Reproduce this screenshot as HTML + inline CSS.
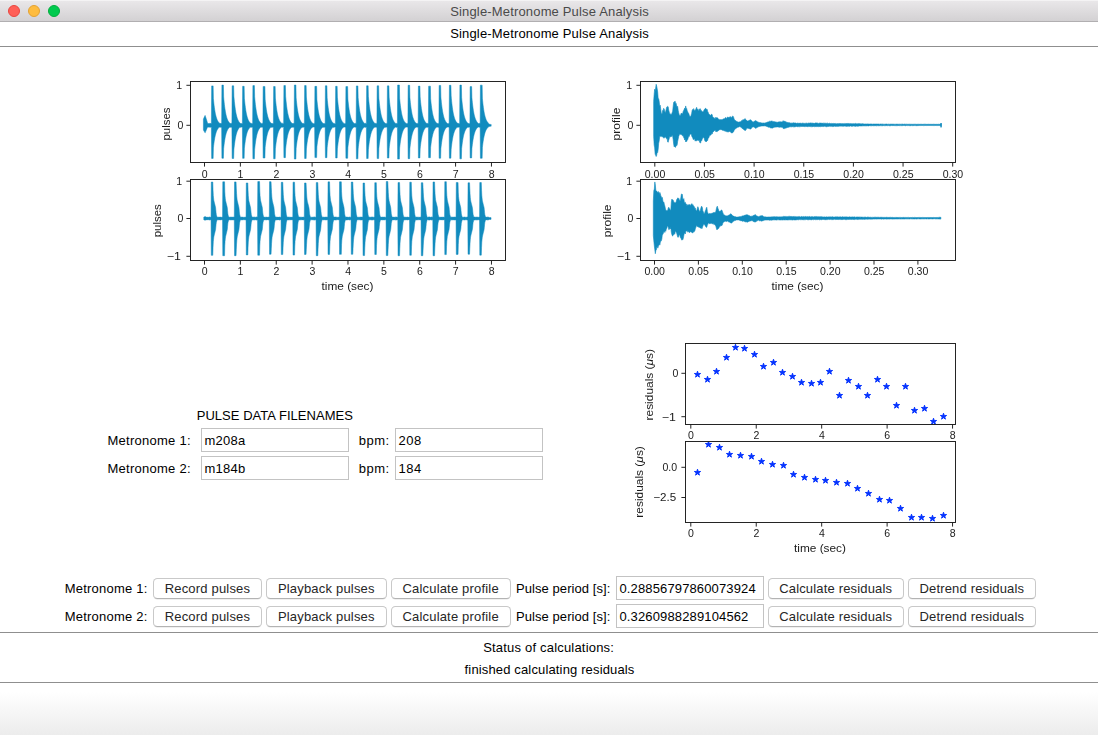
<!DOCTYPE html>
<html><head><meta charset="utf-8"><title>Single-Metronome Pulse Analysis</title>
<style>
html,body{margin:0;padding:0;}
body{width:1098px;height:735px;position:relative;overflow:hidden;background:#fff;font-family:"Liberation Sans", sans-serif;font-size:13px;}
.t{position:absolute;white-space:nowrap;font-size:13px;line-height:16px;height:16px;font-family:"Liberation Sans", sans-serif;}
.titlebar{position:absolute;left:0;top:0;width:1098px;height:22px;box-sizing:border-box;background:linear-gradient(#f4f3f4 0px,#f4f3f4 1px,#e9e7e9 1px,#d3d1d3 21px);border-bottom:1px solid #b1afb1;}
.dot{position:absolute;top:5px;width:12px;height:12px;border-radius:50%;box-sizing:border-box;}
.sep{position:absolute;left:0;width:1098px;height:1px;background:#8f8f8f;}
.entry{position:absolute;box-sizing:border-box;border:1px solid #c3c3c3;background:#fff;}
.btn{position:absolute;box-sizing:border-box;height:21px;border:1px solid #c9c9c9;border-bottom-color:#b3b3b3;border-radius:4.5px;background:#fff;box-shadow:0 0.5px 0.5px rgba(0,0,0,0.12);}
.foot{position:absolute;left:0;top:683px;width:1098px;height:52px;background:linear-gradient(#ffffff,#ffffff 18%,#ececec);}
</style></head><body>
<div class="titlebar"></div>
<div class="dot" style="left:8px;background:#ff5f57;border:1px solid #e9463f;"></div>
<div class="dot" style="left:28px;background:#febc3f;border:1px solid #e3a233;"></div>
<div class="dot" style="left:48px;background:#00ca4e;border:1px solid #02ad3e;"></div>
<div class="sep" style="top:46px"></div>
<div class="sep" style="top:632px"></div>
<div class="sep" style="top:682px"></div>
<div class="foot"></div>

<div class="entry" style="left:201px;top:428px;width:148px;height:24px"></div>
<div class="t" style="left:204.50px;top:433.10px;letter-spacing:0.250px;color:#000;">m208a</div>
<div class="entry" style="left:201px;top:456px;width:148px;height:24px"></div>
<div class="t" style="left:204.50px;top:461.10px;letter-spacing:0.250px;color:#000;">m184b</div>
<div class="entry" style="left:395px;top:428px;width:148px;height:24px"></div>
<div class="t" style="left:398.40px;top:433.10px;letter-spacing:0.533px;color:#000;">208</div>
<div class="entry" style="left:395px;top:456px;width:148px;height:24px"></div>
<div class="t" style="left:398.40px;top:461.10px;letter-spacing:0.533px;color:#000;">184</div>
<div class="entry" style="left:616px;top:576px;width:148px;height:24px"></div>
<div class="t" style="left:619.50px;top:581.10px;letter-spacing:0.133px;color:#000;">0.28856797860073924</div>
<div class="entry" style="left:616px;top:604px;width:148px;height:24px"></div>
<div class="t" style="left:619.50px;top:609.10px;letter-spacing:0.137px;color:#000;">0.3260988289104562</div>
<div class="btn" style="left:153.4px;top:578px;width:108.2px"></div>
<div class="t" style="left:164.70px;top:580.90px;letter-spacing:0.184px;color:#262626;">Record pulses</div>
<div class="btn" style="left:266.0px;top:578px;width:120.6px"></div>
<div class="t" style="left:277.90px;top:580.90px;letter-spacing:0.190px;color:#262626;">Playback pulses</div>
<div class="btn" style="left:391.0px;top:578px;width:119.6px"></div>
<div class="t" style="left:402.50px;top:580.90px;letter-spacing:0.181px;color:#262626;">Calculate profile</div>
<div class="btn" style="left:768.0px;top:578px;width:136.0px"></div>
<div class="t" style="left:779.20px;top:580.90px;letter-spacing:0.166px;color:#262626;">Calculate residuals</div>
<div class="btn" style="left:908.0px;top:578px;width:127.8px"></div>
<div class="t" style="left:919.50px;top:580.90px;letter-spacing:0.165px;color:#262626;">Detrend residuals</div>
<div class="btn" style="left:153.4px;top:606px;width:108.2px"></div>
<div class="t" style="left:164.70px;top:608.90px;letter-spacing:0.184px;color:#262626;">Record pulses</div>
<div class="btn" style="left:266.0px;top:606px;width:120.6px"></div>
<div class="t" style="left:277.90px;top:608.90px;letter-spacing:0.190px;color:#262626;">Playback pulses</div>
<div class="btn" style="left:391.0px;top:606px;width:119.6px"></div>
<div class="t" style="left:402.50px;top:608.90px;letter-spacing:0.181px;color:#262626;">Calculate profile</div>
<div class="btn" style="left:768.0px;top:606px;width:136.0px"></div>
<div class="t" style="left:779.20px;top:608.90px;letter-spacing:0.166px;color:#262626;">Calculate residuals</div>
<div class="btn" style="left:908.0px;top:606px;width:127.8px"></div>
<div class="t" style="left:919.50px;top:608.90px;letter-spacing:0.165px;color:#262626;">Detrend residuals</div>
<div class="t" style="left:450.20px;top:4.00px;letter-spacing:0.163px;color:#4a4a4a;">Single-Metronome Pulse Analysis</div>
<div class="t" style="left:450.20px;top:26.00px;letter-spacing:0.163px;color:#000;">Single-Metronome Pulse Analysis</div>
<div class="t" style="left:196.70px;top:408.10px;letter-spacing:0.037px;color:#000;">PULSE DATA FILENAMES</div>
<div class="t" style="left:107.50px;top:433.10px;letter-spacing:0.258px;color:#000;">Metronome 1:</div>
<div class="t" style="left:107.50px;top:461.10px;letter-spacing:0.258px;color:#000;">Metronome 2:</div>
<div class="t" style="left:358.70px;top:433.10px;letter-spacing:0.525px;color:#000;">bpm:</div>
<div class="t" style="left:358.70px;top:461.10px;letter-spacing:0.525px;color:#000;">bpm:</div>
<div class="t" style="left:64.70px;top:580.90px;letter-spacing:0.217px;color:#000;">Metronome 1:</div>
<div class="t" style="left:64.70px;top:608.90px;letter-spacing:0.217px;color:#000;">Metronome 2:</div>
<div class="t" style="left:515.90px;top:580.90px;letter-spacing:0.081px;color:#000;">Pulse period [s]:</div>
<div class="t" style="left:515.90px;top:608.90px;letter-spacing:0.081px;color:#000;">Pulse period [s]:</div>
<div class="t" style="left:483.20px;top:640.00px;letter-spacing:0.193px;color:#000;">Status of calculations:</div>
<div class="t" style="left:464.60px;top:662.00px;letter-spacing:0.147px;color:#000;">finished calculating residuals</div>
<svg width="860" height="240" viewBox="140 60 860 240" style="position:absolute;left:140px;top:60px;will-change:transform" font-family="Liberation Sans, sans-serif" font-size="10.5" fill="#1a1a1a">
<rect x="190.5" y="81.5" width="315" height="81" fill="#fff" stroke="#1a1a1a" stroke-width="0.95"/>
<clipPath id="c1"><rect x="191" y="82" width="314" height="80"/></clipPath>
<g clip-path="url(#c1)"><polygon points="203.40,119.03 203.65,118.47 203.90,117.91 204.15,117.35 204.40,116.79 204.65,116.23 204.90,115.67 205.15,115.38 205.40,116.17 205.65,116.96 205.90,117.74 206.15,118.53 206.40,119.32 206.65,120.11 206.90,120.89 207.15,121.68 207.40,122.47 207.65,123.25 207.90,123.62 208.15,123.32 208.40,123.65 208.65,123.37 208.90,123.66 209.15,123.49 209.40,123.61 209.65,123.58 209.90,123.19 210.15,123.28 210.40,123.56 210.65,123.24 210.90,123.61 211.15,123.51 211.40,123.25 211.65,85.88 211.90,85.88 212.15,85.88 212.40,85.88 212.65,85.88 212.90,85.88 213.15,85.88 213.40,98.46 213.65,101.12 213.90,103.51 214.15,105.67 214.40,107.61 214.65,109.36 214.90,110.94 215.15,112.36 215.40,113.64 215.65,114.79 215.90,115.83 216.15,116.77 216.40,117.61 216.65,118.37 216.90,119.06 217.15,119.67 217.40,120.23 217.65,120.73 217.90,121.18 218.15,121.59 218.40,121.96 218.65,122.29 218.90,122.59 219.15,122.86 219.40,123.10 219.65,123.32 219.90,123.51 220.15,123.19 220.40,123.60 220.65,123.34 220.90,123.58 221.15,123.27 221.40,123.40 221.65,123.56 221.90,85.12 222.15,85.12 222.40,85.12 222.65,85.12 222.90,85.12 223.15,85.12 223.40,85.12 223.65,96.84 223.90,99.66 224.15,102.19 224.40,104.48 224.65,106.54 224.90,108.39 225.15,110.07 225.40,111.57 225.65,112.93 225.90,114.16 226.15,115.26 226.40,116.25 226.65,117.15 226.90,117.95 227.15,118.68 227.40,119.33 227.65,119.92 227.90,120.46 228.15,120.94 228.40,121.37 228.65,121.76 228.90,122.11 229.15,122.42 229.40,122.71 229.65,122.96 229.90,123.20 230.15,123.32 230.40,123.55 230.65,123.17 230.90,123.69 231.15,123.42 231.40,123.32 231.65,123.23 231.90,123.32 232.15,85.79 232.40,85.79 232.65,85.79 232.90,85.79 233.15,85.79 233.40,85.79 233.65,85.79 233.90,96.19 234.15,99.07 234.40,101.66 234.65,104.00 234.90,106.11 235.15,108.01 235.40,109.72 235.65,111.26 235.90,112.65 236.15,113.90 236.40,115.03 236.65,116.04 236.90,116.96 237.15,117.78 237.40,118.53 237.65,119.20 237.90,119.80 238.15,120.35 238.40,120.84 238.65,121.28 238.90,121.67 239.15,122.03 239.40,122.36 239.65,122.65 239.90,122.91 240.15,123.15 240.40,123.36 240.65,123.22 240.90,123.59 241.15,123.72 241.40,123.56 241.65,123.35 241.90,123.62 242.15,123.63 242.40,123.22 242.65,86.31 242.90,86.31 243.15,86.31 243.40,86.31 243.65,86.31 243.90,86.31 244.15,86.31 244.40,98.37 244.65,101.03 244.90,103.43 245.15,105.60 245.40,107.54 245.65,109.30 245.90,110.88 246.15,112.31 246.40,113.60 246.65,114.75 246.90,115.80 247.15,116.74 247.40,117.58 247.65,118.35 247.90,119.03 248.15,119.65 248.40,120.21 248.65,120.72 248.90,121.17 249.15,121.58 249.40,121.95 249.65,122.28 249.90,122.58 250.15,122.85 250.40,123.09 250.65,123.31 250.90,123.24 251.15,123.68 251.40,123.33 251.65,123.41 251.90,123.56 252.15,123.29 252.40,123.72 252.65,123.65 252.90,85.60 253.15,85.60 253.40,85.60 253.65,85.60 253.90,85.60 254.15,85.60 254.40,85.60 254.65,96.76 254.90,99.59 255.15,102.13 255.40,104.42 255.65,106.49 255.90,108.35 256.15,110.03 256.40,111.54 256.65,112.90 256.90,114.13 257.15,115.23 257.40,116.23 257.65,117.12 257.90,117.93 258.15,118.66 258.40,119.32 258.65,119.91 258.90,120.44 259.15,120.92 259.40,121.36 259.65,121.75 259.90,122.10 260.15,122.42 260.40,122.70 260.65,122.96 260.90,123.19 261.15,123.40 261.40,123.38 261.65,123.22 261.90,123.52 262.15,123.41 262.40,123.24 262.65,123.29 262.90,123.20 263.15,86.46 263.40,86.46 263.65,86.46 263.90,86.46 264.15,86.46 264.40,86.46 264.65,86.46 264.90,86.46 265.15,99.13 265.40,101.72 265.65,104.05 265.90,106.15 266.15,108.05 266.40,109.75 266.65,111.29 266.90,112.68 267.15,113.93 267.40,115.05 267.65,116.07 267.90,116.98 268.15,117.80 268.40,118.54 268.65,119.21 268.90,119.81 269.15,120.36 269.40,120.85 269.65,121.29 269.90,121.68 270.15,122.04 270.40,122.36 270.65,122.65 270.90,122.92 271.15,123.15 271.40,123.26 271.65,123.34 271.90,123.20 272.15,123.45 272.40,123.20 272.65,123.68 272.90,123.60 273.15,123.44 273.40,123.57 273.65,86.47 273.90,86.47 274.15,86.47 274.40,86.47 274.65,86.47 274.90,86.47 275.15,86.47 275.40,98.08 275.65,100.77 275.90,103.20 276.15,105.38 276.40,107.35 276.65,109.13 276.90,110.73 277.15,112.17 277.40,113.47 277.65,114.64 277.90,115.69 278.15,116.64 278.40,117.50 278.65,118.27 278.90,118.97 279.15,119.59 279.40,120.16 279.65,120.67 279.90,121.13 280.15,121.54 280.40,121.91 280.65,122.25 280.90,122.55 281.15,122.82 281.40,123.07 281.65,123.29 281.90,123.49 282.15,123.49 282.40,123.27 282.65,123.23 282.90,123.46 283.15,123.55 283.40,123.62 283.65,123.38 283.90,85.49 284.15,85.49 284.40,85.49 284.65,85.49 284.90,85.49 285.15,85.49 285.40,85.49 285.65,96.27 285.90,99.14 286.15,101.73 286.40,104.06 286.65,106.16 286.90,108.06 287.15,109.76 287.40,111.30 287.65,112.68 287.90,113.93 288.15,115.06 288.40,116.07 288.65,116.98 288.90,117.81 289.15,118.55 289.40,119.22 289.65,119.82 289.90,120.36 290.15,120.85 290.40,121.29 290.65,121.69 290.90,122.04 291.15,122.37 291.40,122.66 291.65,122.92 291.90,123.15 292.15,123.37 292.40,123.55 292.65,123.22 292.90,123.61 293.15,123.17 293.40,123.23 293.65,123.65 293.90,123.59 294.15,123.32 294.40,85.03 294.65,85.03 294.90,85.03 295.15,85.03 295.40,85.03 295.65,85.03 295.90,85.03 296.15,97.77 296.40,100.49 296.65,102.95 296.90,105.16 297.15,107.15 297.40,108.94 297.65,110.56 297.90,112.02 298.15,113.33 298.40,114.52 298.65,115.58 298.90,116.55 299.15,117.41 299.40,118.19 299.65,118.90 299.90,119.53 300.15,120.10 300.40,120.61 300.65,121.08 300.90,121.50 301.15,121.87 301.40,122.21 301.65,122.52 301.90,122.79 302.15,123.04 302.40,123.26 302.65,123.20 302.90,123.47 303.15,123.30 303.40,123.55 303.65,123.47 303.90,123.44 304.15,123.49 304.40,123.39 304.65,85.56 304.90,85.56 305.15,85.56 305.40,85.56 305.65,85.56 305.90,85.56 306.15,85.56 306.40,97.03 306.65,99.83 306.90,102.35 307.15,104.62 307.40,106.66 307.65,108.51 307.90,110.17 308.15,111.67 308.40,113.01 308.65,114.23 308.90,115.33 309.15,116.31 309.40,117.20 309.65,118.00 309.90,118.72 310.15,119.37 310.40,119.96 310.65,120.49 310.90,120.96 311.15,121.39 311.40,121.78 311.65,122.13 311.90,122.44 312.15,122.72 312.40,122.98 312.65,123.21 312.90,123.33 313.15,123.60 313.40,123.54 313.65,123.47 313.90,123.72 314.15,123.53 314.40,123.37 314.65,123.38 314.90,86.36 315.15,86.36 315.40,86.36 315.65,86.36 315.90,86.36 316.15,86.36 316.40,86.36 316.65,86.36 316.90,99.33 317.15,101.90 317.40,104.22 317.65,106.30 317.90,108.18 318.15,109.88 318.40,111.40 318.65,112.78 318.90,114.02 319.15,115.13 319.40,116.14 319.65,117.04 319.90,117.86 320.15,118.60 320.40,119.26 320.65,119.86 320.90,120.40 321.15,120.88 321.40,121.32 321.65,121.71 321.90,122.07 322.15,122.39 322.40,122.67 322.65,122.93 322.90,123.17 323.15,123.31 323.40,123.57 323.65,123.21 323.90,123.64 324.15,123.47 324.40,123.63 324.65,123.45 324.90,123.39 325.15,123.70 325.40,85.76 325.65,85.76 325.90,85.76 326.15,85.76 326.40,85.76 326.65,85.76 326.90,85.76 327.15,97.87 327.40,100.58 327.65,103.03 327.90,105.23 328.15,107.22 328.40,109.01 328.65,110.62 328.90,112.07 329.15,113.38 329.40,114.56 329.65,115.62 329.90,116.58 330.15,117.44 330.40,118.22 330.65,118.92 330.90,119.55 331.15,120.12 331.40,120.63 331.65,121.09 331.90,121.51 332.15,121.88 332.40,122.22 332.65,122.53 332.90,122.80 333.15,123.05 333.40,123.18 333.65,123.27 333.90,123.39 334.15,123.66 334.40,123.38 334.65,123.47 334.90,123.61 335.15,123.70 335.40,123.43 335.65,86.31 335.90,86.31 336.15,86.31 336.40,86.31 336.65,86.31 336.90,86.31 337.15,86.31 337.40,97.16 337.65,99.94 337.90,102.45 338.15,104.71 338.40,106.75 338.65,108.58 338.90,110.24 339.15,111.73 339.40,113.07 339.65,114.28 339.90,115.37 340.15,116.35 340.40,117.24 340.65,118.03 340.90,118.75 341.15,119.40 341.40,119.98 341.65,120.51 341.90,120.98 342.15,121.41 342.40,121.80 342.65,122.14 342.90,122.45 343.15,122.74 343.40,122.99 343.65,123.22 343.90,123.38 344.15,123.61 344.40,123.43 344.65,123.69 344.90,123.68 345.15,123.35 345.40,123.42 345.65,123.38 345.90,86.56 346.15,86.56 346.40,86.56 346.65,86.56 346.90,86.56 347.15,86.56 347.40,86.56 347.65,86.56 347.90,99.09 348.15,101.68 348.40,104.02 348.65,106.13 348.90,108.02 349.15,109.73 349.40,111.27 349.65,112.66 349.90,113.91 350.15,115.04 350.40,116.05 350.65,116.97 350.90,117.79 351.15,118.53 351.40,119.20 351.65,119.81 351.90,120.35 352.15,120.84 352.40,121.28 352.65,121.68 352.90,122.04 353.15,122.36 353.40,122.65 353.65,122.91 353.90,123.15 354.15,123.36 354.40,123.55 354.65,123.36 354.90,123.68 355.15,123.56 355.40,123.33 355.65,123.34 355.90,123.57 356.15,123.65 356.40,85.90 356.65,85.90 356.90,85.90 357.15,85.90 357.40,85.90 357.65,85.90 357.90,85.90 358.15,97.57 358.40,100.31 358.65,102.78 358.90,105.01 359.15,107.02 359.40,108.83 359.65,110.46 359.90,111.92 360.15,113.25 360.40,114.44 360.65,115.51 360.90,116.48 361.15,117.35 361.40,118.14 361.65,118.85 361.90,119.49 362.15,120.06 362.40,120.58 362.65,121.05 362.90,121.47 363.15,121.85 363.40,122.19 363.65,122.50 363.90,122.77 364.15,123.02 364.40,123.25 364.65,123.44 364.90,123.43 365.15,123.41 365.40,123.19 365.65,123.37 365.90,123.28 366.15,123.69 366.40,123.42 366.65,85.78 366.90,85.78 367.15,85.78 367.40,85.78 367.65,85.78 367.90,85.78 368.15,85.78 368.40,96.35 368.65,99.22 368.90,101.80 369.15,104.12 369.40,106.22 369.65,108.11 369.90,109.81 370.15,111.34 370.40,112.72 370.65,113.96 370.90,115.09 371.15,116.10 371.40,117.01 371.65,117.83 371.90,118.57 372.15,119.23 372.40,119.83 372.65,120.37 372.90,120.86 373.15,121.30 373.40,121.70 373.65,122.05 373.90,122.37 374.15,122.66 374.40,122.92 374.65,123.16 374.90,123.37 375.15,123.33 375.40,123.28 375.65,123.49 375.90,123.49 376.15,123.65 376.40,123.32 376.65,123.18 376.90,123.52 377.15,85.81 377.40,85.81 377.65,85.81 377.90,85.81 378.15,85.81 378.40,85.81 378.65,85.81 378.90,98.19 379.15,100.87 379.40,103.29 379.65,105.46 379.90,107.43 380.15,109.19 380.40,110.79 380.65,112.22 380.90,113.52 381.15,114.68 381.40,115.73 381.65,116.68 381.90,117.53 382.15,118.30 382.40,118.99 382.65,119.62 382.90,120.18 383.15,120.69 383.40,121.14 383.65,121.55 383.90,121.92 384.15,122.26 384.40,122.56 384.65,122.83 384.90,123.07 385.15,123.23 385.40,123.22 385.65,123.54 385.90,123.42 386.15,123.20 386.40,123.46 386.65,123.60 386.90,123.70 387.15,123.20 387.40,85.87 387.65,85.87 387.90,85.87 388.15,85.87 388.40,85.87 388.65,85.87 388.90,85.87 389.15,97.14 389.40,99.93 389.65,102.44 389.90,104.70 390.15,106.74 390.40,108.57 390.65,110.23 390.90,111.72 391.15,113.06 391.40,114.27 391.65,115.36 391.90,116.35 392.15,117.23 392.40,118.03 392.65,118.75 392.90,119.40 393.15,119.98 393.40,120.51 393.65,120.98 393.90,121.41 394.15,121.79 394.40,122.14 394.65,122.45 394.90,122.73 395.15,122.99 395.40,123.22 395.65,123.42 395.90,123.46 396.15,123.47 396.40,123.20 396.65,123.40 396.90,123.25 397.15,123.56 397.40,123.29 397.65,85.00 397.90,85.00 398.15,85.00 398.40,85.00 398.65,85.00 398.90,85.00 399.15,85.00 399.40,85.00 399.65,98.32 399.90,100.99 400.15,103.39 400.40,105.56 400.65,107.51 400.90,109.27 401.15,110.86 401.40,112.29 401.65,113.57 401.90,114.73 402.15,115.78 402.40,116.72 402.65,117.57 402.90,118.33 403.15,119.02 403.40,119.64 403.65,120.20 403.90,120.71 404.15,121.16 404.40,121.57 404.65,121.94 404.90,122.27 405.15,122.57 405.40,122.84 405.65,123.09 405.90,123.30 406.15,123.50 406.40,123.52 406.65,123.43 406.90,123.56 407.15,123.54 407.40,123.51 407.65,123.36 407.90,123.59 408.15,85.26 408.40,85.26 408.65,85.26 408.90,85.26 409.15,85.26 409.40,85.26 409.65,85.26 409.90,97.41 410.15,100.17 410.40,102.65 410.65,104.89 410.90,106.91 411.15,108.73 411.40,110.37 411.65,111.85 411.90,113.18 412.15,114.38 412.40,115.46 412.65,116.43 412.90,117.31 413.15,118.10 413.40,118.81 413.65,119.45 413.90,120.03 414.15,120.55 414.40,121.02 414.65,121.45 414.90,121.83 415.15,122.17 415.40,122.48 415.65,122.76 415.90,123.01 416.15,123.24 416.40,123.44 416.65,123.34 416.90,123.18 417.15,123.29 417.40,123.36 417.65,123.39 417.90,123.72 418.15,123.54 418.40,86.10 418.65,86.10 418.90,86.10 419.15,86.10 419.40,86.10 419.65,86.10 419.90,86.10 420.15,96.89 420.40,99.70 420.65,102.24 420.90,104.52 421.15,106.57 421.40,108.43 421.65,110.09 421.90,111.60 422.15,112.95 422.40,114.18 422.65,115.28 422.90,116.27 423.15,117.16 423.40,117.97 423.65,118.69 423.90,119.35 424.15,119.93 424.40,120.47 424.65,120.94 424.90,121.37 425.15,121.76 425.40,122.11 425.65,122.43 425.90,122.71 426.15,122.97 426.40,123.20 426.65,123.19 426.90,123.59 427.15,123.23 427.40,123.43 427.65,123.42 427.90,123.42 428.15,123.58 428.40,123.22 428.65,86.15 428.90,86.15 429.15,86.15 429.40,86.15 429.65,86.15 429.90,86.15 430.15,86.15 430.40,86.15 430.65,98.70 430.90,101.33 431.15,103.70 431.40,105.84 431.65,107.76 431.90,109.50 432.15,111.06 432.40,112.47 432.65,113.74 432.90,114.88 433.15,115.91 433.40,116.84 433.65,117.68 433.90,118.43 434.15,119.11 434.40,119.72 434.65,120.28 434.90,120.77 435.15,121.22 435.40,121.62 435.65,121.99 435.90,122.32 436.15,122.61 436.40,122.88 436.65,123.12 436.90,123.33 437.15,123.53 437.40,123.37 437.65,123.71 437.90,123.36 438.15,123.65 438.40,123.20 438.65,123.39 438.90,123.47 439.15,85.38 439.40,85.38 439.65,85.38 439.90,85.38 440.15,85.38 440.40,85.38 440.65,85.38 440.90,97.08 441.15,99.87 441.40,102.39 441.65,104.65 441.90,106.70 442.15,108.54 442.40,110.20 442.65,111.69 442.90,113.04 443.15,114.25 443.40,115.34 443.65,116.33 443.90,117.21 444.15,118.01 444.40,118.74 444.65,119.38 444.90,119.97 445.15,120.50 445.40,120.97 445.65,121.40 445.90,121.79 446.15,122.13 446.40,122.45 446.65,122.73 446.90,122.98 447.15,123.21 447.40,123.42 447.65,123.59 447.90,123.56 448.15,123.51 448.40,123.60 448.65,123.69 448.90,123.22 449.15,123.19 449.40,85.25 449.65,85.25 449.90,85.25 450.15,85.25 450.40,85.25 450.65,85.25 450.90,85.25 451.15,95.85 451.40,98.76 451.65,101.38 451.90,103.75 452.15,105.88 452.40,107.80 452.65,109.53 452.90,111.09 453.15,112.50 453.40,113.77 453.65,114.91 453.90,115.93 454.15,116.86 454.40,117.70 454.65,118.45 454.90,119.13 455.15,119.74 455.40,120.29 455.65,120.78 455.90,121.23 456.15,121.63 456.40,122.00 456.65,122.32 456.90,122.62 457.15,122.88 457.40,123.12 457.65,123.22 457.90,123.23 458.15,123.62 458.40,123.26 458.65,123.53 458.90,123.47 459.15,123.63 459.40,123.24 459.65,123.18 459.90,85.07 460.15,85.07 460.40,85.07 460.65,85.07 460.90,85.07 461.15,85.07 461.40,85.07 461.65,97.56 461.90,100.31 462.15,102.78 462.40,105.01 462.65,107.02 462.90,108.82 463.15,110.45 463.40,111.92 463.65,113.25 463.90,114.44 464.15,115.51 464.40,116.48 464.65,117.35 464.90,118.14 465.15,118.85 465.40,119.49 465.65,120.06 465.90,120.58 466.15,121.05 466.40,121.47 466.65,121.85 466.90,122.19 467.15,122.50 467.40,122.77 467.65,123.02 467.90,123.25 468.15,123.37 468.40,123.63 468.65,123.18 468.90,123.48 469.15,123.43 469.40,123.43 469.65,123.70 469.90,123.39 470.15,86.61 470.40,86.61 470.65,86.61 470.90,86.61 471.15,86.61 471.40,86.61 471.65,86.61 471.90,97.55 472.15,100.30 472.40,102.77 472.65,105.00 472.90,107.01 473.15,108.82 473.40,110.45 473.65,111.92 473.90,113.24 474.15,114.43 474.40,115.51 474.65,116.48 474.90,117.35 475.15,118.14 475.40,118.84 475.65,119.48 475.90,120.06 476.15,120.58 476.40,121.04 476.65,121.47 476.90,121.84 477.15,122.19 477.40,122.49 477.65,122.77 477.90,123.02 478.15,123.25 478.40,123.39 478.65,123.60 478.90,123.48 479.15,123.30 479.40,123.29 479.65,123.29 479.90,123.60 480.15,123.46 480.40,85.14 480.65,85.14 480.90,85.14 481.15,85.14 481.40,85.14 481.65,85.14 481.90,85.14 482.15,85.14 482.40,98.30 482.65,100.97 482.90,103.38 483.15,105.55 483.40,107.50 483.65,109.26 483.90,110.85 484.15,112.28 484.40,113.57 484.65,114.73 484.90,115.77 485.15,116.72 485.40,117.56 485.65,118.33 485.90,119.02 486.15,119.64 486.40,120.20 486.65,120.70 486.90,121.16 487.15,121.57 487.40,121.94 487.65,122.27 487.90,122.57 488.15,122.84 488.40,123.23 488.65,123.60 488.90,123.92 489.15,123.96 489.40,124.08 489.65,124.26 489.90,124.40 490.15,124.40 490.40,124.40 490.65,124.40 490.90,124.40 491.15,124.40 491.15,126.20 490.90,126.20 490.65,126.20 490.40,126.20 490.15,126.20 489.90,126.20 489.65,126.34 489.40,126.52 489.15,126.64 488.90,126.57 488.65,126.76 488.40,127.00 488.15,127.33 487.90,127.54 487.65,127.79 487.40,128.06 487.15,128.37 486.90,128.70 486.65,129.08 486.40,129.49 486.15,129.95 485.90,130.46 485.65,131.03 485.40,131.66 485.15,132.35 484.90,133.13 484.65,133.99 484.40,134.94 484.15,136.00 483.90,137.17 483.65,138.48 483.40,139.92 483.15,141.53 482.90,143.31 482.65,145.29 482.40,147.48 482.15,158.29 481.90,158.29 481.65,158.29 481.40,158.29 481.15,158.29 480.90,158.29 480.65,158.29 480.40,158.29 480.15,127.14 479.90,127.00 479.65,127.31 479.40,127.31 479.15,127.30 478.90,127.12 478.65,127.00 478.40,127.21 478.15,127.03 477.90,127.31 477.65,127.43 477.40,127.66 477.15,127.92 476.90,128.21 476.65,128.53 476.40,128.89 476.15,129.28 475.90,129.72 475.65,130.20 475.40,130.74 475.15,131.34 474.90,132.00 474.65,132.73 474.40,133.55 474.15,134.46 473.90,135.46 473.65,136.58 473.40,137.81 473.15,139.19 472.90,140.71 472.65,142.41 472.40,144.28 472.15,146.37 471.90,148.68 471.65,157.90 471.40,157.90 471.15,157.90 470.90,157.90 470.65,157.90 470.40,157.90 470.15,157.90 469.90,127.21 469.65,126.90 469.40,127.17 469.15,127.17 468.90,127.12 468.65,127.42 468.40,126.92 468.15,127.23 467.90,127.03 467.65,127.24 467.40,127.41 467.15,127.64 466.90,127.90 466.65,128.18 466.40,128.50 466.15,128.85 465.90,129.24 465.65,129.67 465.40,130.15 465.15,130.68 464.90,131.27 464.65,131.93 464.40,132.66 464.15,133.47 463.90,134.36 463.65,135.36 463.40,136.46 463.15,137.69 462.90,139.05 462.65,140.56 462.40,142.23 462.15,144.09 461.90,146.15 461.65,148.44 461.40,158.87 461.15,158.87 460.90,158.87 460.65,158.87 460.40,158.87 460.15,158.87 459.90,158.87 459.65,127.42 459.40,127.36 459.15,126.97 458.90,127.13 458.65,127.07 458.40,127.34 458.15,126.98 457.90,127.37 457.65,127.38 457.40,127.09 457.15,127.28 456.90,127.50 456.65,127.74 456.40,128.01 456.15,128.31 455.90,128.64 455.65,129.01 455.40,129.41 455.15,129.87 454.90,130.37 454.65,130.92 454.40,131.54 454.15,132.22 453.90,132.99 453.65,133.83 453.40,134.77 453.15,135.80 452.90,136.96 452.65,138.24 452.40,139.66 452.15,141.23 451.90,142.98 451.65,144.92 451.40,147.08 451.15,149.47 450.90,158.17 450.65,158.17 450.40,158.17 450.15,158.17 449.90,158.17 449.65,158.17 449.40,158.17 449.15,127.41 448.90,127.38 448.65,126.91 448.40,127.00 448.15,127.09 447.90,127.04 447.65,127.01 447.40,127.16 447.15,127.26 446.90,127.21 446.65,127.42 446.40,127.65 446.15,127.91 445.90,128.19 445.65,128.51 445.40,128.87 445.15,129.26 444.90,129.69 444.65,130.17 444.40,130.71 444.15,131.30 443.90,131.96 443.65,132.69 443.40,133.50 443.15,134.40 442.90,135.40 442.65,136.51 442.40,137.74 442.15,139.11 441.90,140.63 441.65,142.31 441.40,144.17 441.15,146.25 440.90,148.55 440.65,158.19 440.40,158.19 440.15,158.19 439.90,158.19 439.65,158.19 439.40,158.19 439.15,158.19 438.90,127.13 438.65,127.21 438.40,127.40 438.15,126.95 437.90,127.24 437.65,126.89 437.40,127.23 437.15,127.06 436.90,127.19 436.65,127.11 436.40,127.30 436.15,127.52 435.90,127.77 435.65,128.04 435.40,128.34 435.15,128.67 434.90,129.04 434.65,129.46 434.40,129.91 434.15,130.42 433.90,130.98 433.65,131.60 433.40,132.30 433.15,133.06 432.90,133.92 432.65,134.86 432.40,135.91 432.15,137.08 431.90,138.37 431.65,139.81 431.40,141.40 431.15,143.17 430.90,145.13 430.65,147.30 430.40,157.69 430.15,157.69 429.90,157.69 429.65,157.69 429.40,157.69 429.15,157.69 428.90,157.69 428.65,157.69 428.40,127.38 428.15,127.02 427.90,127.18 427.65,127.18 427.40,127.17 427.15,127.37 426.90,126.95 426.65,127.41 426.40,127.05 426.15,127.24 425.90,127.45 425.65,127.69 425.40,127.95 425.15,128.24 424.90,128.57 424.65,128.93 424.40,129.32 424.15,129.77 423.90,130.26 423.65,130.80 423.40,131.40 423.15,132.08 422.90,132.82 422.65,133.64 422.40,134.56 422.15,135.58 421.90,136.71 421.65,137.96 421.40,139.35 421.15,140.89 420.90,142.60 420.65,144.50 420.40,146.61 420.15,148.95 419.90,157.93 419.65,157.93 419.40,157.93 419.15,157.93 418.90,157.93 418.65,157.93 418.40,157.93 418.15,127.06 417.90,126.88 417.65,127.21 417.40,127.24 417.15,127.31 416.90,127.42 416.65,127.26 416.40,127.09 416.15,127.02 415.90,127.21 415.65,127.42 415.40,127.65 415.15,127.91 414.90,128.19 414.65,128.51 414.40,128.86 414.15,129.25 413.90,129.69 413.65,130.17 413.40,130.71 413.15,131.30 412.90,131.96 412.65,132.69 412.40,133.50 412.15,134.40 411.90,135.40 411.65,136.51 411.40,137.74 411.15,139.10 410.90,140.62 410.65,142.30 410.40,144.17 410.15,146.24 409.90,148.54 409.65,158.66 409.40,158.66 409.15,158.66 408.90,158.66 408.65,158.66 408.40,158.66 408.15,158.66 407.90,127.01 407.65,127.24 407.40,127.09 407.15,127.06 406.90,127.04 406.65,127.17 406.40,127.08 406.15,127.03 405.90,127.21 405.65,127.16 405.40,127.36 405.15,127.59 404.90,127.84 404.65,128.12 404.40,128.43 404.15,128.77 403.90,129.15 403.65,129.57 403.40,130.04 403.15,130.56 402.90,131.14 402.65,131.78 402.40,132.49 402.15,133.28 401.90,134.16 401.65,135.13 401.40,136.21 401.15,137.41 400.90,138.74 400.65,140.22 400.40,141.85 400.15,143.67 399.90,145.69 399.65,147.93 399.40,159.09 399.15,159.09 398.90,159.09 398.65,159.09 398.40,159.09 398.15,159.09 397.90,159.09 397.65,159.09 397.40,127.31 397.15,127.04 396.90,127.35 396.65,127.20 396.40,127.40 396.15,127.13 395.90,127.14 395.65,126.93 395.40,127.27 395.15,127.22 394.90,127.43 394.65,127.66 394.40,127.92 394.15,128.21 393.90,128.53 393.65,128.88 393.40,129.28 393.15,129.71 392.90,130.20 392.65,130.73 392.40,131.33 392.15,131.99 391.90,132.73 391.65,133.54 391.40,134.45 391.15,135.45 390.90,136.57 390.65,137.80 390.40,139.17 390.15,140.70 389.90,142.39 389.65,144.26 389.40,146.35 389.15,148.66 388.90,158.00 388.65,158.00 388.40,158.00 388.15,158.00 387.90,158.00 387.65,158.00 387.40,158.00 387.15,127.40 386.90,126.90 386.65,127.00 386.40,127.14 386.15,127.40 385.90,127.18 385.65,127.06 385.40,127.38 385.15,127.37 384.90,127.18 384.65,127.38 384.40,127.61 384.15,127.86 383.90,128.15 383.65,128.46 383.40,128.80 383.15,129.19 382.90,129.62 382.65,130.09 382.40,130.62 382.15,131.20 381.90,131.85 381.65,132.57 381.40,133.36 381.15,134.25 380.90,135.23 380.65,136.32 380.40,137.53 380.15,138.87 379.90,140.37 379.65,142.02 379.40,143.85 379.15,145.89 378.90,148.15 378.65,158.59 378.40,158.59 378.15,158.59 377.90,158.59 377.65,158.59 377.40,158.59 377.15,158.59 376.90,127.08 376.65,127.42 376.40,127.28 376.15,126.95 375.90,127.11 375.65,127.11 375.40,127.32 375.15,127.27 374.90,127.16 374.65,127.23 374.40,127.40 374.15,127.52 373.90,127.76 373.65,128.03 373.40,128.33 373.15,128.67 372.90,129.03 372.65,129.44 372.40,129.90 372.15,130.40 371.90,130.96 371.65,131.59 371.40,132.28 371.15,133.04 370.90,133.89 370.65,134.84 370.40,135.88 370.15,137.05 369.90,138.33 369.65,139.77 369.40,141.35 369.15,143.12 368.90,145.07 368.65,147.24 368.40,149.65 368.15,158.55 367.90,158.55 367.65,158.55 367.40,158.55 367.15,158.55 366.90,158.55 366.65,158.55 366.40,127.18 366.15,126.91 365.90,127.32 365.65,127.23 365.40,127.41 365.15,127.19 364.90,127.17 364.65,127.16 364.40,127.05 364.15,127.24 363.90,127.45 363.65,127.69 363.40,127.95 363.15,128.24 362.90,128.56 362.65,128.92 362.40,129.32 362.15,129.76 361.90,130.25 361.65,130.80 361.40,131.40 361.15,132.07 360.90,132.81 360.65,133.64 360.40,134.55 360.15,135.57 359.90,136.69 359.65,137.94 359.40,139.33 359.15,140.87 358.90,142.58 358.65,144.48 358.40,146.59 358.15,148.92 357.90,158.86 357.65,158.86 357.40,158.86 357.15,158.86 356.90,158.86 356.65,158.86 356.40,158.86 356.15,126.95 355.90,127.03 355.65,127.26 355.40,127.27 355.15,127.04 354.90,126.92 354.65,127.24 354.40,126.99 354.15,126.95 353.90,127.30 353.65,127.33 353.40,127.56 353.15,127.80 352.90,128.08 352.65,128.38 352.40,128.72 352.15,129.10 351.90,129.52 351.65,129.98 351.40,130.49 351.15,131.06 350.90,131.69 350.65,132.40 350.40,133.17 350.15,134.04 349.90,135.00 349.65,136.06 349.40,137.25 349.15,138.56 348.90,140.01 348.65,141.63 348.40,143.42 348.15,145.41 347.90,147.62 347.65,158.28 347.40,158.28 347.15,158.28 346.90,158.28 346.65,158.28 346.40,158.28 346.15,158.28 345.90,158.28 345.65,127.22 345.40,127.18 345.15,127.25 344.90,126.92 344.65,126.91 344.40,127.17 344.15,126.93 343.90,127.22 343.65,127.11 343.40,127.23 343.15,127.45 342.90,127.68 342.65,127.94 342.40,128.23 342.15,128.56 341.90,128.91 341.65,129.31 341.40,129.75 341.15,130.24 340.90,130.78 340.65,131.38 340.40,132.05 340.15,132.79 339.90,133.61 339.65,134.53 339.40,135.54 339.15,136.66 338.90,137.91 338.65,139.30 338.40,140.83 338.15,142.54 337.90,144.43 337.65,146.53 337.40,148.86 337.15,157.95 336.90,157.95 336.65,157.95 336.40,157.95 336.15,157.95 335.90,157.95 335.65,157.95 335.40,127.17 335.15,126.90 334.90,126.99 334.65,127.13 334.40,127.22 334.15,126.94 333.90,127.21 333.65,127.33 333.40,127.42 333.15,127.14 332.90,127.35 332.65,127.57 332.40,127.82 332.15,128.10 331.90,128.40 331.65,128.74 331.40,129.12 331.15,129.54 330.90,130.01 330.65,130.52 330.40,131.10 330.15,131.73 329.90,132.44 329.65,133.22 329.40,134.09 329.15,135.06 328.90,136.13 328.65,137.32 328.40,138.64 328.15,140.10 327.90,141.73 327.65,143.53 327.40,145.53 327.15,147.76 326.90,157.67 326.65,157.67 326.40,157.67 326.15,157.67 325.90,157.67 325.65,157.67 325.40,157.67 325.15,126.90 324.90,127.21 324.65,127.15 324.40,126.97 324.15,127.13 323.90,126.96 323.65,127.39 323.40,126.90 323.15,127.29 322.90,127.20 322.65,127.26 322.40,127.48 322.15,127.72 321.90,127.98 321.65,128.28 321.40,128.60 321.15,128.97 320.90,129.37 320.65,129.81 320.40,130.31 320.15,130.86 319.90,131.47 319.65,132.15 319.40,132.90 319.15,133.73 318.90,134.66 318.65,135.69 318.40,136.83 318.15,138.09 317.90,139.50 317.65,141.06 317.40,142.79 317.15,144.71 316.90,146.84 316.65,157.60 316.40,157.60 316.15,157.60 315.90,157.60 315.65,157.60 315.40,157.60 315.15,157.60 314.90,157.60 314.65,127.22 314.40,127.23 314.15,127.07 313.90,126.88 313.65,127.13 313.40,127.06 313.15,126.91 312.90,127.27 312.65,127.10 312.40,127.30 312.15,127.45 311.90,127.69 311.65,127.95 311.40,128.24 311.15,128.56 310.90,128.92 310.65,129.32 310.40,129.76 310.15,130.25 309.90,130.80 309.65,131.40 309.40,132.07 309.15,132.81 308.90,133.64 308.65,134.55 308.40,135.57 308.15,136.69 307.90,137.95 307.65,139.33 307.40,140.87 307.15,142.58 306.90,144.48 306.65,146.59 306.40,148.93 306.15,158.52 305.90,158.52 305.65,158.52 305.40,158.52 305.15,158.52 304.90,158.52 304.65,158.52 304.40,127.21 304.15,127.11 303.90,127.16 303.65,127.13 303.40,127.05 303.15,127.30 302.90,127.13 302.65,127.40 302.40,127.01 302.15,127.19 301.90,127.40 301.65,127.63 301.40,127.89 301.15,128.17 300.90,128.49 300.65,128.84 300.40,129.23 300.15,129.66 299.90,130.14 299.65,130.67 299.40,131.26 299.15,131.91 298.90,132.64 298.65,133.44 298.40,134.33 298.15,135.33 297.90,136.43 297.65,137.65 297.40,139.01 297.15,140.51 296.90,142.18 296.65,144.03 296.40,146.09 296.15,148.37 295.90,159.05 295.65,159.05 295.40,159.05 295.15,159.05 294.90,159.05 294.65,159.05 294.40,159.05 294.15,127.28 293.90,127.01 293.65,126.95 293.40,127.37 293.15,127.43 292.90,126.99 292.65,127.38 292.40,127.05 292.15,127.05 291.90,127.37 291.65,127.32 291.40,127.45 291.15,127.68 290.90,127.95 290.65,128.24 290.40,128.56 290.15,128.92 289.90,129.31 289.65,129.76 289.40,130.24 289.15,130.79 288.90,131.39 288.65,132.06 288.40,132.80 288.15,133.62 287.90,134.54 287.65,135.55 287.40,136.68 287.15,137.93 286.90,139.31 286.65,140.85 286.40,142.56 286.15,144.45 285.90,146.55 285.65,148.89 285.40,157.64 285.15,157.64 284.90,157.64 284.65,157.64 284.40,157.64 284.15,157.64 283.90,157.64 283.65,127.22 283.40,126.98 283.15,127.05 282.90,127.14 282.65,127.37 282.40,127.33 282.15,127.11 281.90,126.94 281.65,127.14 281.40,127.23 281.15,127.44 280.90,127.67 280.65,127.94 280.40,128.22 280.15,128.55 279.90,128.90 279.65,129.30 279.40,129.74 279.15,130.22 278.90,130.76 278.65,131.36 278.40,132.03 278.15,132.77 277.90,133.59 277.65,134.50 277.40,135.51 277.15,136.63 276.90,137.87 276.65,139.25 276.40,140.79 276.15,142.49 275.90,144.37 275.65,146.47 275.40,148.79 275.15,158.81 274.90,158.81 274.65,158.81 274.40,158.81 274.15,158.81 273.90,158.81 273.65,158.81 273.40,127.03 273.15,127.16 272.90,127.00 272.65,126.92 272.40,127.40 272.15,127.15 271.90,127.40 271.65,127.26 271.40,127.34 271.15,127.27 270.90,127.31 270.65,127.53 270.40,127.78 270.15,128.05 269.90,128.35 269.65,128.68 269.40,129.05 269.15,129.47 268.90,129.92 268.65,130.43 268.40,131.00 268.15,131.62 267.90,132.31 267.65,133.08 267.40,133.94 267.15,134.89 266.90,135.94 266.65,137.11 266.40,138.40 266.15,139.84 265.90,141.44 265.65,143.21 265.40,145.18 265.15,147.36 264.90,158.04 264.65,158.04 264.40,158.04 264.15,158.04 263.90,158.04 263.65,158.04 263.40,158.04 263.15,158.04 262.90,127.40 262.65,127.31 262.40,127.36 262.15,127.19 261.90,127.08 261.65,127.38 261.40,127.22 261.15,127.12 260.90,127.08 260.65,127.28 260.40,127.49 260.15,127.73 259.90,128.00 259.65,128.30 259.40,128.63 259.15,128.99 258.90,129.40 258.65,129.85 258.40,130.34 258.15,130.90 257.90,131.51 257.65,132.20 257.40,132.95 257.15,133.79 256.90,134.72 256.65,135.76 256.40,136.91 256.15,138.18 255.90,139.60 255.65,141.17 255.40,142.91 255.15,144.84 254.90,146.99 254.65,149.37 254.40,158.79 254.15,158.79 253.90,158.79 253.65,158.79 253.40,158.79 253.15,158.79 252.90,158.79 252.65,126.95 252.40,126.88 252.15,127.31 251.90,127.04 251.65,127.19 251.40,127.27 251.15,126.90 250.90,127.36 250.65,126.99 250.40,127.17 250.15,127.38 249.90,127.61 249.65,127.86 249.40,128.14 249.15,128.46 248.90,128.80 248.65,129.19 248.40,129.61 248.15,130.09 247.90,130.61 247.65,131.20 247.40,131.84 247.15,132.56 246.90,133.36 246.65,134.24 246.40,135.23 246.15,136.31 245.90,137.52 245.65,138.87 245.40,140.36 245.15,142.01 244.90,143.84 244.65,145.88 244.40,148.14 244.15,158.36 243.90,158.36 243.65,158.36 243.40,158.36 243.15,158.36 242.90,158.36 242.65,158.36 242.40,127.38 242.15,126.97 241.90,126.98 241.65,127.25 241.40,127.04 241.15,126.88 240.90,127.01 240.65,127.38 240.40,127.21 240.15,127.15 239.90,127.31 239.65,127.53 239.40,127.77 239.15,128.04 238.90,128.34 238.65,128.68 238.40,129.05 238.15,129.46 237.90,129.92 237.65,130.42 237.40,130.99 237.15,131.61 236.90,132.30 236.65,133.07 236.40,133.93 236.15,134.87 235.90,135.92 235.65,137.09 235.40,138.38 235.15,139.82 234.90,141.42 234.65,143.18 234.40,145.15 234.15,147.33 233.90,149.75 233.65,158.47 233.40,158.47 233.15,158.47 232.90,158.47 232.65,158.47 232.40,158.47 232.15,158.47 231.90,127.28 231.65,127.37 231.40,127.28 231.15,127.18 230.90,126.91 230.65,127.43 230.40,127.05 230.15,127.28 229.90,127.14 229.65,127.23 229.40,127.43 229.15,127.66 228.90,127.92 228.65,128.21 228.40,128.53 228.15,128.88 227.90,129.28 227.65,129.71 227.40,130.20 227.15,130.74 226.90,131.33 226.65,131.99 226.40,132.73 226.15,133.54 225.90,134.45 225.65,135.45 225.40,136.57 225.15,137.81 224.90,139.18 224.65,140.70 224.40,142.39 224.15,144.27 223.90,146.35 223.65,148.67 223.40,158.29 223.15,158.29 222.90,158.29 222.65,158.29 222.40,158.29 222.15,158.29 221.90,158.29 221.65,127.04 221.40,127.20 221.15,127.33 220.90,127.02 220.65,127.26 220.40,127.00 220.15,127.41 219.90,126.89 219.65,126.97 219.40,127.15 219.15,127.35 218.90,127.58 218.65,127.83 218.40,128.11 218.15,128.42 217.90,128.76 217.65,129.14 217.40,129.56 217.15,130.03 216.90,130.55 216.65,131.12 216.40,131.76 216.15,132.47 215.90,133.26 215.65,134.13 215.40,135.10 215.15,136.18 214.90,137.37 214.65,138.70 214.40,140.17 214.15,141.80 213.90,143.61 213.65,145.62 213.40,147.86 213.15,158.43 212.90,158.43 212.65,158.43 212.40,158.43 212.15,158.43 211.90,158.43 211.65,158.43 211.40,127.35 211.15,127.09 210.90,126.99 210.65,127.36 210.40,127.04 210.15,127.32 209.90,127.41 209.65,127.02 209.40,126.99 209.15,127.11 208.90,126.94 208.65,127.23 208.40,126.95 208.15,127.28 207.90,126.98 207.65,127.12 207.40,127.44 207.15,128.03 206.90,128.63 206.65,129.22 206.40,129.82 206.15,130.41 205.90,131.00 205.65,131.60 205.40,132.19 205.15,132.79 204.90,132.57 204.65,132.14 204.40,131.72 204.15,131.30 203.90,130.88 203.65,130.45 203.40,130.03" fill="#118bbe" stroke="#118bbe" stroke-width="0.5" stroke-linejoin="round"/></g>
<line x1="204.50" y1="162.5" x2="204.50" y2="166.6" stroke="#1a1a1a" stroke-width="0.95"/>
<text x="204.70" y="177.80" text-anchor="middle" textLength="5.87" lengthAdjust="spacingAndGlyphs">0</text>
<line x1="240.37" y1="162.5" x2="240.37" y2="166.6" stroke="#1a1a1a" stroke-width="0.95"/>
<text x="240.57" y="177.80" text-anchor="middle" textLength="5.87" lengthAdjust="spacingAndGlyphs">1</text>
<line x1="276.24" y1="162.5" x2="276.24" y2="166.6" stroke="#1a1a1a" stroke-width="0.95"/>
<text x="276.44" y="177.80" text-anchor="middle" textLength="5.87" lengthAdjust="spacingAndGlyphs">2</text>
<line x1="312.11" y1="162.5" x2="312.11" y2="166.6" stroke="#1a1a1a" stroke-width="0.95"/>
<text x="312.31" y="177.80" text-anchor="middle" textLength="5.87" lengthAdjust="spacingAndGlyphs">3</text>
<line x1="347.98" y1="162.5" x2="347.98" y2="166.6" stroke="#1a1a1a" stroke-width="0.95"/>
<text x="348.18" y="177.80" text-anchor="middle" textLength="5.87" lengthAdjust="spacingAndGlyphs">4</text>
<line x1="383.85" y1="162.5" x2="383.85" y2="166.6" stroke="#1a1a1a" stroke-width="0.95"/>
<text x="384.05" y="177.80" text-anchor="middle" textLength="5.87" lengthAdjust="spacingAndGlyphs">5</text>
<line x1="419.72" y1="162.5" x2="419.72" y2="166.6" stroke="#1a1a1a" stroke-width="0.95"/>
<text x="419.92" y="177.80" text-anchor="middle" textLength="5.87" lengthAdjust="spacingAndGlyphs">6</text>
<line x1="455.59" y1="162.5" x2="455.59" y2="166.6" stroke="#1a1a1a" stroke-width="0.95"/>
<text x="455.79" y="177.80" text-anchor="middle" textLength="5.87" lengthAdjust="spacingAndGlyphs">7</text>
<line x1="491.46" y1="162.5" x2="491.46" y2="166.6" stroke="#1a1a1a" stroke-width="0.95"/>
<text x="491.66" y="177.80" text-anchor="middle" textLength="5.87" lengthAdjust="spacingAndGlyphs">8</text>
<line x1="186.4" y1="85.30" x2="190.5" y2="85.30" stroke="#1a1a1a" stroke-width="0.95"/>
<text x="182.10" y="89.20" text-anchor="end" textLength="5.87" lengthAdjust="spacingAndGlyphs">1</text>
<line x1="186.4" y1="125.30" x2="190.5" y2="125.30" stroke="#1a1a1a" stroke-width="0.95"/>
<text x="183.30" y="129.20" text-anchor="end" textLength="5.87" lengthAdjust="spacingAndGlyphs">0</text>
<text x="170.00" y="124.00" text-anchor="middle" textLength="33.00" lengthAdjust="spacingAndGlyphs" transform="rotate(-90 170.00 124.00)">pulses</text>
<rect x="190.5" y="179.5" width="315" height="81" fill="#fff" stroke="#1a1a1a" stroke-width="0.95"/>
<clipPath id="c2"><rect x="191" y="180" width="314" height="80"/></clipPath>
<g clip-path="url(#c2)"><polygon points="203.80,217.10 204.05,216.99 204.30,216.87 204.55,216.76 204.80,216.65 205.05,216.53 205.30,216.55 205.55,216.75 205.80,216.95 206.05,217.16 206.30,216.90 206.55,217.30 206.80,217.00 207.05,216.96 207.30,217.30 207.55,216.98 207.80,217.16 208.05,217.07 208.30,217.31 208.55,217.29 208.80,217.23 209.05,216.91 209.30,217.23 209.55,216.99 209.80,216.92 210.05,216.91 210.30,217.17 210.55,217.16 210.80,217.09 211.05,216.98 211.30,182.06 211.55,182.06 211.80,182.06 212.05,182.06 212.30,182.06 212.55,182.06 212.80,182.06 213.05,190.30 213.30,195.54 213.55,197.91 213.80,200.28 214.05,201.30 214.30,202.33 214.55,203.35 214.80,204.36 215.05,205.36 215.30,206.36 215.55,207.37 215.80,209.75 216.05,212.49 216.30,214.49 216.55,215.40 216.80,216.31 217.05,217.09 217.30,217.14 217.55,217.21 217.80,217.06 218.05,216.96 218.30,217.12 218.55,217.13 218.80,217.29 219.05,216.93 219.30,217.30 219.55,217.10 219.80,216.96 220.05,217.26 220.30,217.00 220.55,216.91 220.80,217.05 221.05,216.98 221.30,217.27 221.55,217.13 221.80,217.25 222.05,216.96 222.30,217.19 222.55,217.12 222.80,181.80 223.05,181.80 223.30,181.80 223.55,181.80 223.80,181.80 224.05,181.80 224.30,181.80 224.55,181.80 224.80,191.69 225.05,196.10 225.30,198.48 225.55,200.46 225.80,201.49 226.05,202.53 226.30,203.56 226.55,204.56 226.80,205.57 227.05,206.58 227.30,207.77 227.55,210.52 227.80,213.27 228.05,214.74 228.30,215.66 228.55,216.57 228.80,217.03 229.05,216.99 229.30,217.16 229.55,217.01 229.80,217.19 230.05,217.11 230.30,216.99 230.55,217.02 230.80,217.19 231.05,216.91 231.30,217.04 231.55,217.07 231.80,217.31 232.05,217.08 232.30,217.20 232.55,217.03 232.80,217.12 233.05,216.97 233.30,217.04 233.55,216.97 233.80,217.16 234.05,217.04 234.30,217.00 234.55,181.88 234.80,181.88 235.05,181.88 235.30,181.88 235.55,181.88 235.80,181.88 236.05,181.88 236.30,188.06 236.55,193.33 236.80,196.86 237.05,199.24 237.30,200.81 237.55,201.84 237.80,202.87 238.05,203.89 238.30,204.90 238.55,205.90 238.80,206.91 239.05,208.61 239.30,211.36 239.55,214.11 239.80,215.02 240.05,215.94 240.30,216.85 240.55,217.01 240.80,217.30 241.05,217.24 241.30,217.12 241.55,217.04 241.80,217.22 242.05,217.02 242.30,217.05 242.55,217.29 242.80,217.11 243.05,217.21 243.30,217.29 243.55,217.25 243.80,217.18 244.05,217.23 244.30,217.23 244.55,217.30 244.80,217.11 245.05,217.15 245.30,217.05 245.55,217.06 245.80,217.21 246.05,216.93 246.30,182.94 246.55,182.94 246.80,182.94 247.05,182.94 247.30,182.94 247.55,182.94 247.80,182.94 248.05,190.47 248.30,195.58 248.55,198.18 248.80,200.49 249.05,201.62 249.30,202.62 249.55,203.62 249.80,204.60 250.05,205.58 250.30,206.56 250.55,207.54 250.80,209.70 251.05,212.37 251.30,214.50 251.55,215.39 251.80,216.28 252.05,216.90 252.30,217.05 252.55,217.16 252.80,216.93 253.05,217.31 253.30,217.26 253.55,217.07 253.80,217.05 254.05,217.25 254.30,217.05 254.55,216.94 254.80,217.15 255.05,217.13 255.30,217.21 255.55,217.19 255.80,216.90 256.05,217.15 256.30,216.91 256.55,216.93 256.80,217.06 257.05,217.20 257.30,216.90 257.55,217.10 257.80,181.58 258.05,181.58 258.30,181.58 258.55,181.58 258.80,181.58 259.05,181.58 259.30,181.58 259.55,181.58 259.80,191.00 260.05,195.72 260.30,198.12 260.55,200.25 260.80,201.29 261.05,202.33 261.30,203.36 261.55,204.38 261.80,205.39 262.05,206.41 262.30,207.43 262.55,210.19 262.80,212.96 263.05,214.62 263.30,215.55 263.55,216.47 263.80,217.04 264.05,217.06 264.30,217.00 264.55,217.26 264.80,216.99 265.05,217.18 265.30,217.09 265.55,217.17 265.80,217.19 266.05,217.09 266.30,217.11 266.55,217.16 266.80,217.00 267.05,217.06 267.30,217.29 267.55,217.20 267.80,217.12 268.05,216.93 268.30,216.94 268.55,217.08 268.80,217.30 269.05,216.98 269.30,217.13 269.55,181.65 269.80,181.65 270.05,181.65 270.30,181.65 270.55,181.65 270.80,181.65 271.05,181.65 271.30,187.34 271.55,192.63 271.80,196.48 272.05,198.88 272.30,200.59 272.55,201.63 272.80,202.66 273.05,203.69 273.30,204.71 273.55,205.72 273.80,206.73 274.05,208.27 274.30,211.04 274.55,213.80 274.80,214.91 275.05,215.83 275.30,216.75 275.55,217.06 275.80,216.97 276.05,217.28 276.30,217.21 276.55,216.97 276.80,216.98 277.05,217.03 277.30,217.30 277.55,217.01 277.80,216.90 278.05,216.89 278.30,217.02 278.55,217.29 278.80,216.96 279.05,217.22 279.30,217.04 279.55,216.91 279.80,217.01 280.05,217.25 280.30,217.19 280.55,216.92 280.80,217.25 281.05,217.05 281.30,182.29 281.55,182.29 281.80,182.29 282.05,182.29 282.30,182.29 282.55,182.29 282.80,182.29 283.05,189.44 283.30,194.64 283.55,197.57 283.80,199.92 284.05,201.21 284.30,202.23 284.55,203.24 284.80,204.25 285.05,205.25 285.30,206.24 285.55,207.24 285.80,209.27 286.05,211.98 286.30,214.34 286.55,215.24 286.80,216.15 287.05,216.93 287.30,217.08 287.55,217.05 287.80,217.20 288.05,217.08 288.30,217.20 288.55,216.99 288.80,217.09 289.05,217.25 289.30,217.21 289.55,217.15 289.80,217.00 290.05,217.23 290.30,217.01 290.55,217.03 290.80,217.27 291.05,217.03 291.30,217.27 291.55,217.26 291.80,217.06 292.05,217.21 292.30,216.94 292.55,217.11 292.80,217.17 293.05,182.18 293.30,182.18 293.55,182.18 293.80,182.18 294.05,182.18 294.30,182.18 294.55,182.18 294.80,190.92 295.05,195.85 295.30,198.21 295.55,200.44 295.80,201.46 296.05,202.48 296.30,203.50 296.55,204.51 296.80,205.50 297.05,206.50 297.30,207.50 297.55,210.05 297.80,212.78 298.05,214.60 298.30,215.50 298.55,216.41 298.80,216.97 299.05,217.13 299.30,216.95 299.55,217.09 299.80,217.06 300.05,217.07 300.30,217.00 300.55,217.14 300.80,217.27 301.05,217.30 301.30,217.22 301.55,217.29 301.80,216.94 302.05,217.11 302.30,216.99 302.55,217.31 302.80,217.11 303.05,216.94 303.30,217.05 303.55,217.13 303.80,217.11 304.05,217.27 304.30,217.25 304.55,182.96 304.80,182.96 305.05,182.96 305.30,182.96 305.55,182.96 305.80,182.96 306.05,182.96 306.30,187.94 306.55,193.04 306.80,197.03 307.05,199.34 307.30,201.13 307.55,202.13 307.80,203.13 308.05,204.12 308.30,205.10 308.55,206.08 308.80,207.06 309.05,208.37 309.30,211.04 309.55,213.70 309.80,214.95 310.05,215.83 310.30,216.72 310.55,217.24 310.80,217.23 311.05,217.30 311.30,217.21 311.55,217.28 311.80,217.14 312.05,216.90 312.30,217.16 312.55,217.18 312.80,217.11 313.05,217.19 313.30,217.00 313.55,217.01 313.80,217.24 314.05,217.21 314.30,217.03 314.55,216.91 314.80,217.04 315.05,217.13 315.30,216.90 315.55,217.31 315.80,217.28 316.05,216.98 316.30,182.57 316.55,182.57 316.80,182.57 317.05,182.57 317.30,182.57 317.55,182.57 317.80,182.57 318.05,189.15 318.30,194.31 318.55,197.50 318.80,199.83 319.05,201.24 319.30,202.25 319.55,203.26 319.80,204.26 320.05,205.25 320.30,206.24 320.55,207.23 320.80,209.07 321.05,211.76 321.30,214.28 321.55,215.18 321.80,216.07 322.05,216.97 322.30,217.14 322.55,217.09 322.80,217.27 323.05,217.18 323.30,217.26 323.55,217.08 323.80,216.92 324.05,217.06 324.30,216.95 324.55,217.22 324.80,217.30 325.05,217.08 325.30,217.11 325.55,217.07 325.80,217.15 326.05,217.05 326.30,217.01 326.55,216.93 326.80,217.18 327.05,217.12 327.30,216.96 327.55,217.22 327.80,217.26 328.05,181.85 328.30,181.85 328.55,181.85 328.80,181.85 329.05,181.85 329.30,181.85 329.55,181.85 329.80,190.14 330.05,195.41 330.30,197.79 330.55,200.17 330.80,201.20 331.05,202.24 331.30,203.27 331.55,204.28 331.80,205.29 332.05,206.29 332.30,207.30 332.55,209.70 332.80,212.45 333.05,214.47 333.30,215.38 333.55,216.30 333.80,216.93 334.05,217.04 334.30,216.99 334.55,217.07 334.80,217.12 335.05,216.97 335.30,217.03 335.55,216.91 335.80,217.00 336.05,217.02 336.30,217.20 336.55,216.97 336.80,217.15 337.05,217.26 337.30,217.28 337.55,217.24 337.80,217.20 338.05,217.03 338.30,217.19 338.55,217.28 338.80,216.99 339.05,217.08 339.30,217.30 339.55,181.80 339.80,181.80 340.05,181.80 340.30,181.80 340.55,181.80 340.80,181.80 341.05,181.80 341.30,181.80 341.55,191.69 341.80,196.09 342.05,198.48 342.30,200.46 342.55,201.49 342.80,202.52 343.05,203.55 343.30,204.56 343.55,205.57 343.80,206.58 344.05,207.77 344.30,210.52 344.55,213.27 344.80,214.74 345.05,215.66 345.30,216.57 345.55,217.12 345.80,217.13 346.05,217.12 346.30,216.99 346.55,216.92 346.80,217.09 347.05,216.90 347.30,217.06 347.55,217.27 347.80,216.97 348.05,217.13 348.30,217.29 348.55,216.90 348.80,217.30 349.05,217.07 349.30,217.11 349.55,216.94 349.80,217.15 350.05,217.22 350.30,217.19 350.55,217.23 350.80,217.07 351.05,217.16 351.30,182.07 351.55,182.07 351.80,182.07 352.05,182.07 352.30,182.07 352.55,182.07 352.80,182.07 353.05,188.21 353.30,193.45 353.55,196.97 353.80,199.34 354.05,200.90 354.30,201.92 354.55,202.95 354.80,203.96 355.05,204.96 355.30,205.97 355.55,206.97 355.80,208.66 356.05,211.40 356.30,214.13 356.55,215.04 356.80,215.95 357.05,216.86 357.30,217.15 357.55,217.31 357.80,217.10 358.05,217.06 358.30,217.23 358.55,217.15 358.80,217.18 359.05,217.30 359.30,217.18 359.55,217.15 359.80,217.11 360.05,217.01 360.30,217.14 360.55,216.90 360.80,216.97 361.05,216.92 361.30,217.02 361.55,217.03 361.80,217.08 362.05,216.97 362.30,217.16 362.55,217.06 362.80,217.02 363.05,182.98 363.30,182.98 363.55,182.98 363.80,182.98 364.05,182.98 364.30,182.98 364.55,182.98 364.80,190.50 365.05,195.61 365.30,198.20 365.55,200.51 365.80,201.64 366.05,202.64 366.30,203.64 366.55,204.62 366.80,205.60 367.05,206.57 367.30,207.55 367.55,209.71 367.80,212.37 368.05,214.50 368.30,215.39 368.55,216.28 368.80,216.93 369.05,217.21 369.30,216.90 369.55,217.08 369.80,217.14 370.05,217.31 370.30,217.15 370.55,217.24 370.80,217.04 371.05,216.93 371.30,216.93 371.55,217.05 371.80,217.15 372.05,217.26 372.30,217.02 372.55,217.08 372.80,217.01 373.05,217.15 373.30,216.94 373.55,217.22 373.80,217.18 374.05,217.20 374.30,217.05 374.55,216.93 374.80,182.67 375.05,182.67 375.30,182.67 375.55,182.67 375.80,182.67 376.05,182.67 376.30,182.67 376.55,191.81 376.80,196.39 377.05,198.72 377.30,200.79 377.55,201.79 377.80,202.80 378.05,203.81 378.30,204.80 378.55,205.78 378.80,206.77 379.05,207.75 379.30,210.44 379.55,213.13 379.80,214.74 380.05,215.63 380.30,216.53 380.55,217.21 380.80,217.06 381.05,217.04 381.30,217.02 381.55,217.00 381.80,217.28 382.05,217.11 382.30,216.96 382.55,216.91 382.80,217.18 383.05,216.95 383.30,217.04 383.55,216.92 383.80,217.21 384.05,217.02 384.30,216.96 384.55,217.11 384.80,217.27 385.05,217.23 385.30,217.24 385.55,217.27 385.80,217.25 386.05,217.05 386.30,181.53 386.55,181.53 386.80,181.53 387.05,181.53 387.30,181.53 387.55,181.53 387.80,181.53 388.05,187.23 388.30,192.55 388.55,196.41 388.80,198.81 389.05,200.53 389.30,201.57 389.55,202.61 389.80,203.65 390.05,204.66 390.30,205.68 390.55,206.70 390.80,208.24 391.05,211.01 391.30,213.79 391.55,214.90 391.80,215.82 392.05,216.74 392.30,217.15 392.55,217.02 392.80,217.10 393.05,216.91 393.30,216.91 393.55,217.28 393.80,216.99 394.05,217.01 394.30,217.19 394.55,217.26 394.80,217.11 395.05,217.16 395.30,217.00 395.55,216.92 395.80,217.15 396.05,217.19 396.30,217.10 396.55,217.02 396.80,216.98 397.05,217.07 397.30,217.19 397.55,217.17 397.80,216.95 398.05,182.55 398.30,182.55 398.55,182.55 398.80,182.55 399.05,182.55 399.30,182.55 399.55,182.55 399.80,189.65 400.05,194.82 400.30,197.72 400.55,200.06 400.80,201.33 401.05,202.35 401.30,203.36 401.55,204.35 401.80,205.34 402.05,206.33 402.30,207.32 402.55,209.33 402.80,212.03 403.05,214.37 403.30,215.26 403.55,216.16 403.80,217.06 404.05,217.29 404.30,217.22 404.55,216.90 404.80,217.12 405.05,217.11 405.30,217.27 405.55,217.19 405.80,216.91 406.05,217.02 406.30,217.10 406.55,217.29 406.80,217.15 407.05,216.98 407.30,217.13 407.55,217.06 407.80,216.93 408.05,217.04 408.30,217.04 408.55,217.29 408.80,217.30 409.05,216.99 409.30,217.14 409.55,216.94 409.80,182.18 410.05,182.18 410.30,182.18 410.55,182.18 410.80,182.18 411.05,182.18 411.30,182.18 411.55,190.92 411.80,195.86 412.05,198.22 412.30,200.44 412.55,201.46 412.80,202.49 413.05,203.51 413.30,204.51 413.55,205.51 413.80,206.51 414.05,207.50 414.30,210.06 414.55,212.78 414.80,214.60 415.05,215.50 415.30,216.41 415.55,216.94 415.80,217.23 416.05,217.30 416.30,216.96 416.55,216.91 416.80,217.06 417.05,217.25 417.30,217.21 417.55,216.92 417.80,216.92 418.05,217.30 418.30,217.23 418.55,217.13 418.80,217.20 419.05,216.99 419.30,217.15 419.55,216.98 419.80,217.25 420.05,217.09 420.30,216.90 420.55,217.02 420.80,217.27 421.05,217.26 421.30,182.68 421.55,182.68 421.80,182.68 422.05,182.68 422.30,182.68 422.55,182.68 422.80,182.68 423.05,187.69 423.30,192.84 423.55,196.86 423.80,199.19 424.05,200.99 424.30,202.00 424.55,203.01 424.80,204.01 425.05,204.99 425.30,205.98 425.55,206.96 425.80,208.29 426.05,210.98 426.30,213.66 426.55,214.92 426.80,215.81 427.05,216.71 427.30,217.16 427.55,217.30 427.80,217.18 428.05,217.12 428.30,217.03 428.55,216.92 428.80,217.15 429.05,217.09 429.30,217.01 429.55,216.92 429.80,216.91 430.05,216.90 430.30,217.18 430.55,217.24 430.80,216.92 431.05,217.28 431.30,217.12 431.55,217.00 431.80,217.09 432.05,217.15 432.30,216.92 432.55,217.18 432.80,217.08 433.05,181.96 433.30,181.96 433.55,181.96 433.80,181.96 434.05,181.96 434.30,181.96 434.55,181.96 434.80,188.65 435.05,193.90 435.30,197.14 435.55,199.52 435.80,200.95 436.05,201.98 436.30,203.00 436.55,204.02 436.80,205.03 437.05,206.03 437.30,207.03 437.55,208.91 437.80,211.65 438.05,214.21 438.30,215.12 438.55,216.03 438.80,216.94 439.05,217.13 439.30,216.93 439.55,217.24 439.80,217.25 440.05,217.29 440.30,217.00 440.55,217.07 440.80,217.31 441.05,217.29 441.30,216.96 441.55,217.10 441.80,216.94 442.05,217.29 442.30,217.06 442.55,217.26 442.80,217.01 443.05,217.05 443.30,217.05 443.55,217.22 443.80,216.91 444.05,217.26 444.30,217.28 444.55,217.02 444.80,181.66 445.05,181.66 445.30,181.66 445.55,181.66 445.80,181.66 446.05,181.66 446.30,181.66 446.55,189.99 446.80,195.29 447.05,197.68 447.30,200.08 447.55,201.11 447.80,202.15 448.05,203.19 448.30,204.21 448.55,205.22 448.80,206.23 449.05,207.24 449.30,209.66 449.55,212.42 449.80,214.45 450.05,215.37 450.30,216.29 450.55,217.10 450.80,217.16 451.05,217.28 451.30,217.13 451.55,217.05 451.80,217.04 452.05,217.24 452.30,217.25 452.55,217.10 452.80,217.02 453.05,217.12 453.30,217.07 453.55,216.93 453.80,217.25 454.05,217.20 454.30,217.10 454.55,217.08 454.80,216.93 455.05,217.08 455.30,217.03 455.55,217.13 455.80,216.98 456.05,216.96 456.30,182.45 456.55,182.45 456.80,182.45 457.05,182.45 457.30,182.45 457.55,182.45 457.80,182.45 458.05,182.45 458.30,192.16 458.55,196.49 458.80,198.83 459.05,200.78 459.30,201.79 459.55,202.80 459.80,203.82 460.05,204.81 460.30,205.80 460.55,206.79 460.80,207.95 461.05,210.66 461.30,213.36 461.55,214.80 461.80,215.71 462.05,216.61 462.30,217.24 462.55,217.28 462.80,217.01 463.05,217.14 463.30,216.94 463.55,217.28 463.80,217.18 464.05,217.23 464.30,216.91 464.55,216.98 464.80,216.93 465.05,217.10 465.30,217.27 465.55,217.14 465.80,217.21 466.05,217.30 466.30,217.07 466.55,217.19 466.80,217.26 467.05,217.10 467.30,216.92 467.55,216.91 467.80,217.11 468.05,182.76 468.30,182.76 468.55,182.76 468.80,182.76 469.05,182.76 469.30,182.76 469.55,182.76 469.80,188.79 470.05,193.93 470.30,197.38 470.55,199.70 470.80,201.24 471.05,202.24 471.30,203.25 471.55,204.24 471.80,205.22 472.05,206.21 472.30,207.19 472.55,208.85 472.80,211.53 473.05,214.21 473.30,215.11 473.55,216.00 473.80,216.89 474.05,217.11 474.30,217.12 474.55,216.92 474.80,217.07 475.05,217.10 475.30,217.19 475.55,217.00 475.80,217.20 476.05,217.11 476.30,216.99 476.55,217.06 476.80,217.25 477.05,217.22 477.30,217.02 477.55,217.00 477.80,217.27 478.05,216.89 478.30,217.25 478.55,217.24 478.80,217.27 479.05,217.12 479.30,217.05 479.55,216.95 479.80,182.53 480.05,182.53 480.30,182.53 480.55,182.53 480.80,182.53 481.05,182.53 481.30,182.53 481.55,190.15 481.80,195.32 482.05,197.95 482.30,200.28 482.55,201.43 482.80,202.44 483.05,203.45 483.30,204.45 483.55,205.44 483.80,206.42 484.05,207.41 484.30,209.60 484.55,212.30 484.80,214.45 485.05,215.35 485.30,216.25 485.55,217.10 485.80,217.03 486.05,216.99 486.30,217.00 486.55,217.31 486.80,216.91 487.05,217.18 487.30,216.95 487.55,217.03 487.80,217.13 488.05,216.96 488.30,217.08 488.55,217.32 488.80,217.30 489.05,217.50 489.30,217.56 489.55,217.60 489.80,217.60 490.05,217.60 490.30,217.60 490.55,217.60 490.80,217.60 491.05,217.60 491.05,219.40 490.80,219.40 490.55,219.40 490.30,219.40 490.05,219.40 489.80,219.40 489.55,219.40 489.30,219.44 489.05,219.50 488.80,219.70 488.55,219.68 488.30,219.92 488.05,220.04 487.80,219.87 487.55,219.97 487.30,220.05 487.05,219.82 486.80,220.09 486.55,219.69 486.30,220.00 486.05,220.01 485.80,219.97 485.55,219.93 485.30,220.79 485.05,221.71 484.80,222.62 484.55,224.82 484.30,227.57 484.05,229.79 483.80,230.80 483.55,231.81 483.30,232.81 483.05,233.83 482.80,234.86 482.55,235.89 482.30,237.06 482.05,239.44 481.80,242.11 481.55,247.37 481.30,255.13 481.05,255.13 480.80,255.13 480.55,255.13 480.30,255.13 480.05,255.13 479.80,255.13 479.55,220.05 479.30,219.95 479.05,219.88 478.80,219.73 478.55,219.76 478.30,219.75 478.05,220.11 477.80,219.73 477.55,220.00 477.30,219.98 477.05,219.78 476.80,219.75 476.55,219.94 476.30,220.01 476.05,219.89 475.80,219.80 475.55,220.00 475.30,219.81 475.05,219.90 474.80,219.93 474.55,220.08 474.30,219.88 474.05,219.89 473.80,220.11 473.55,221.00 473.30,221.89 473.05,222.79 472.80,225.47 472.55,228.15 472.30,229.81 472.05,230.79 471.80,231.77 471.55,232.76 471.30,233.75 471.05,234.76 470.80,235.76 470.55,237.29 470.30,239.62 470.05,243.06 469.80,248.20 469.55,254.23 469.30,254.23 469.05,254.23 468.80,254.23 468.55,254.23 468.30,254.23 468.05,254.23 467.80,219.89 467.55,220.09 467.30,220.08 467.05,219.90 466.80,219.74 466.55,219.81 466.30,219.93 466.05,219.70 465.80,219.79 465.55,219.86 465.30,219.73 465.05,219.90 464.80,220.07 464.55,220.02 464.30,220.09 464.05,219.77 463.80,219.82 463.55,219.72 463.30,220.06 463.05,219.86 462.80,219.99 462.55,219.72 462.30,219.76 462.05,220.38 461.80,221.28 461.55,222.18 461.30,223.62 461.05,226.31 460.80,229.00 460.55,230.16 460.30,231.15 460.05,232.13 459.80,233.12 459.55,234.13 459.30,235.14 459.05,236.15 458.80,238.08 458.55,240.42 458.30,244.73 458.05,254.40 457.80,254.40 457.55,254.40 457.30,254.40 457.05,254.40 456.80,254.40 456.55,254.40 456.30,254.40 456.05,220.04 455.80,220.02 455.55,219.87 455.30,219.97 455.05,219.92 454.80,220.07 454.55,219.92 454.30,219.90 454.05,219.80 453.80,219.75 453.55,220.07 453.30,219.93 453.05,219.88 452.80,219.98 452.55,219.90 452.30,219.75 452.05,219.76 451.80,219.96 451.55,219.95 451.30,219.87 451.05,219.72 450.80,219.84 450.55,219.87 450.30,220.67 450.05,221.57 449.80,222.47 449.55,224.46 449.30,227.17 449.05,229.54 448.80,230.53 448.55,231.52 448.30,232.52 448.05,233.51 447.80,234.53 447.55,235.55 447.30,236.56 447.05,238.91 446.80,241.26 446.55,246.45 446.30,254.62 446.05,254.62 445.80,254.62 445.55,254.62 445.30,254.62 445.05,254.62 444.80,254.62 444.55,219.98 444.30,219.72 444.05,219.74 443.80,220.09 443.55,219.78 443.30,219.95 443.05,219.95 442.80,219.99 442.55,219.74 442.30,219.94 442.05,219.71 441.80,220.06 441.55,219.90 441.30,220.04 441.05,219.71 440.80,219.69 440.55,219.93 440.30,220.00 440.05,219.71 439.80,219.75 439.55,219.76 439.30,220.07 439.05,219.87 438.80,220.08 438.55,221.01 438.30,221.95 438.05,222.88 437.80,225.48 437.55,228.28 437.30,230.19 437.05,231.21 436.80,232.23 436.55,233.26 436.30,234.29 436.05,235.34 435.80,236.39 435.55,237.85 435.30,240.27 435.05,243.57 434.80,248.92 434.55,255.74 434.30,255.74 434.05,255.74 433.80,255.74 433.55,255.74 433.30,255.74 433.05,255.74 432.80,219.92 432.55,219.82 432.30,220.08 432.05,219.85 431.80,219.91 431.55,220.00 431.30,219.88 431.05,219.72 430.80,220.08 430.55,219.76 430.30,219.82 430.05,220.10 429.80,220.09 429.55,220.08 429.30,219.99 429.05,219.91 428.80,219.85 428.55,220.08 428.30,219.97 428.05,219.88 427.80,219.82 427.55,219.70 427.30,219.84 427.05,220.36 426.80,221.29 426.55,222.22 426.30,223.52 426.05,226.31 425.80,229.10 425.55,230.48 425.30,231.50 425.05,232.52 424.80,233.55 424.55,234.59 424.30,235.64 424.05,236.68 423.80,238.55 423.55,240.97 423.30,245.15 423.05,250.49 422.80,255.70 422.55,255.70 422.30,255.70 422.05,255.70 421.80,255.70 421.55,255.70 421.30,255.70 421.05,219.74 420.80,219.73 420.55,219.98 420.30,220.10 420.05,219.91 419.80,219.75 419.55,220.02 419.30,219.85 419.05,220.01 418.80,219.80 418.55,219.87 418.30,219.77 418.05,219.70 417.80,220.08 417.55,220.08 417.30,219.79 417.05,219.75 416.80,219.94 416.55,220.09 416.30,220.04 416.05,219.70 415.80,219.77 415.55,220.06 415.30,220.61 415.05,221.53 414.80,222.45 414.55,224.29 414.30,227.05 414.05,229.63 413.80,230.64 413.55,231.65 413.30,232.66 413.05,233.67 412.80,234.71 412.55,235.74 412.30,236.78 412.05,239.03 411.80,241.42 411.55,246.41 411.30,255.26 411.05,255.26 410.80,255.26 410.55,255.26 410.30,255.26 410.05,255.26 409.80,255.26 409.55,220.06 409.30,219.86 409.05,220.01 408.80,219.70 408.55,219.71 408.30,219.96 408.05,219.96 407.80,220.07 407.55,219.94 407.30,219.87 407.05,220.02 406.80,219.85 406.55,219.71 406.30,219.90 406.05,219.98 405.80,220.09 405.55,219.81 405.30,219.73 405.05,219.89 404.80,219.88 404.55,220.10 404.30,219.78 404.05,219.71 403.80,219.99 403.55,220.92 403.30,221.85 403.05,222.78 402.80,225.20 402.55,228.00 402.30,230.08 402.05,231.10 401.80,232.13 401.55,233.15 401.30,234.19 401.05,235.23 400.80,236.28 400.55,237.60 400.30,240.02 400.05,243.03 399.80,248.38 399.55,255.74 399.30,255.74 399.05,255.74 398.80,255.74 398.55,255.74 398.30,255.74 398.05,255.74 397.80,220.05 397.55,219.83 397.30,219.81 397.05,219.93 396.80,220.02 396.55,219.98 396.30,219.90 396.05,219.81 395.80,219.85 395.55,220.08 395.30,220.00 395.05,219.84 394.80,219.89 394.55,219.74 394.30,219.81 394.05,219.99 393.80,220.01 393.55,219.72 393.30,220.09 393.05,220.09 392.80,219.90 392.55,219.98 392.30,219.85 392.05,220.26 391.80,221.19 391.55,222.12 391.30,223.23 391.05,226.01 390.80,228.79 390.55,230.34 390.30,231.36 390.05,232.38 389.80,233.40 389.55,234.44 389.30,235.48 389.05,236.52 388.80,238.25 388.55,240.66 388.30,244.53 388.05,249.86 387.80,255.59 387.55,255.59 387.30,255.59 387.05,255.59 386.80,255.59 386.55,255.59 386.30,255.59 386.05,219.95 385.80,219.75 385.55,219.73 385.30,219.76 385.05,219.77 384.80,219.73 384.55,219.89 384.30,220.04 384.05,219.98 383.80,219.79 383.55,220.08 383.30,219.96 383.05,220.05 382.80,219.82 382.55,220.09 382.30,220.04 382.05,219.89 381.80,219.72 381.55,220.00 381.30,219.98 381.05,219.96 380.80,219.94 380.55,219.80 380.30,220.48 380.05,221.38 379.80,222.28 379.55,223.90 379.30,226.60 379.05,229.29 378.80,230.28 378.55,231.27 378.30,232.26 378.05,233.25 377.80,234.27 377.55,235.28 377.30,236.29 377.05,238.36 376.80,240.70 376.55,245.31 376.30,254.48 376.05,254.48 375.80,254.48 375.55,254.48 375.30,254.48 375.05,254.48 374.80,254.48 374.55,220.07 374.30,219.95 374.05,219.80 373.80,219.82 373.55,219.78 373.30,220.06 373.05,219.85 372.80,219.99 372.55,219.92 372.30,219.98 372.05,219.74 371.80,219.85 371.55,219.95 371.30,220.07 371.05,220.07 370.80,219.96 370.55,219.76 370.30,219.85 370.05,219.69 369.80,219.86 369.55,219.92 369.30,220.10 369.05,219.79 368.80,220.07 368.55,220.82 368.30,221.74 368.05,222.67 367.80,224.90 367.55,227.68 367.30,229.93 367.05,230.95 366.80,231.97 366.55,232.99 366.30,234.02 366.05,235.06 365.80,236.10 365.55,237.28 365.30,239.69 365.05,242.40 364.80,247.73 364.55,255.58 364.30,255.58 364.05,255.58 363.80,255.58 363.55,255.58 363.30,255.58 363.05,255.58 362.80,219.98 362.55,219.94 362.30,219.84 362.05,220.03 361.80,219.92 361.55,219.97 361.30,219.98 361.05,220.08 360.80,220.03 360.55,220.10 360.30,219.86 360.05,219.99 359.80,219.89 359.55,219.85 359.30,219.82 359.05,219.70 358.80,219.82 358.55,219.85 358.30,219.77 358.05,219.94 357.80,219.90 357.55,219.69 357.30,219.85 357.05,220.11 356.80,221.01 356.55,221.90 356.30,222.80 356.05,225.49 355.80,228.18 355.55,229.84 355.30,230.83 355.05,231.81 354.80,232.80 354.55,233.80 354.30,234.80 354.05,235.81 353.80,237.35 353.55,239.68 353.30,243.14 353.05,248.29 352.80,254.33 352.55,254.33 352.30,254.33 352.05,254.33 351.80,254.33 351.55,254.33 351.30,254.33 351.05,219.84 350.80,219.93 350.55,219.77 350.30,219.81 350.05,219.78 349.80,219.85 349.55,220.06 349.30,219.89 349.05,219.93 348.80,219.70 348.55,220.10 348.30,219.71 348.05,219.87 347.80,220.03 347.55,219.73 347.30,219.94 347.05,220.10 346.80,219.91 346.55,220.08 346.30,220.01 346.05,219.88 345.80,219.87 345.55,219.88 345.30,220.38 345.05,221.28 344.80,222.18 344.55,223.61 344.30,226.30 344.05,228.99 343.80,230.14 343.55,231.13 343.30,232.12 343.05,233.10 342.80,234.11 342.55,235.12 342.30,236.12 342.05,238.06 341.80,240.39 341.55,244.70 341.30,254.35 341.05,254.35 340.80,254.35 340.55,254.35 340.30,254.35 340.05,254.35 339.80,254.35 339.55,254.35 339.30,219.70 339.05,219.92 338.80,220.01 338.55,219.72 338.30,219.81 338.05,219.97 337.80,219.80 337.55,219.76 337.30,219.72 337.05,219.74 336.80,219.85 336.55,220.03 336.30,219.80 336.05,219.98 335.80,220.00 335.55,220.09 335.30,219.97 335.05,220.03 334.80,219.88 334.55,219.93 334.30,220.01 334.05,219.96 333.80,220.07 333.55,220.65 333.30,221.55 333.05,222.45 332.80,224.42 332.55,227.11 332.30,229.46 332.05,230.45 331.80,231.44 331.55,232.43 331.30,233.42 331.05,234.43 330.80,235.44 330.55,236.44 330.30,238.78 330.05,241.11 329.80,246.27 329.55,254.39 329.30,254.39 329.05,254.39 328.80,254.39 328.55,254.39 328.30,254.39 328.05,254.39 327.80,219.74 327.55,219.78 327.30,220.04 327.05,219.88 326.80,219.82 326.55,220.07 326.30,219.99 326.05,219.95 325.80,219.85 325.55,219.93 325.30,219.89 325.05,219.92 324.80,219.70 324.55,219.78 324.30,220.05 324.05,219.94 323.80,220.08 323.55,219.92 323.30,219.74 323.05,219.82 322.80,219.73 322.55,219.91 322.30,219.86 322.05,220.08 321.80,221.01 321.55,221.94 321.30,222.87 321.05,225.47 320.80,228.25 320.55,230.16 320.30,231.18 320.05,232.20 319.80,233.22 319.55,234.26 319.30,235.30 319.05,236.35 318.80,237.80 318.55,240.22 318.30,243.51 318.05,248.85 317.80,255.66 317.55,255.66 317.30,255.66 317.05,255.66 316.80,255.66 316.55,255.66 316.30,255.66 316.05,220.02 315.80,219.72 315.55,219.69 315.30,220.10 315.05,219.87 314.80,219.96 314.55,220.09 314.30,219.97 314.05,219.79 313.80,219.76 313.55,219.99 313.30,220.00 313.05,219.81 312.80,219.89 312.55,219.82 312.30,219.84 312.05,220.10 311.80,219.86 311.55,219.72 311.30,219.79 311.05,219.70 310.80,219.77 310.55,219.76 310.30,220.30 310.05,221.20 309.80,222.10 309.55,223.36 309.30,226.06 309.05,228.76 308.80,230.09 308.55,231.08 308.30,232.07 308.05,233.06 307.80,234.06 307.55,235.08 307.30,236.09 307.05,237.90 306.80,240.24 306.55,244.27 306.30,249.45 306.05,254.49 305.80,254.49 305.55,254.49 305.30,254.49 305.05,254.49 304.80,254.49 304.55,254.49 304.30,219.75 304.05,219.73 303.80,219.89 303.55,219.87 303.30,219.95 303.05,220.06 302.80,219.89 302.55,219.69 302.30,220.01 302.05,219.89 301.80,220.06 301.55,219.71 301.30,219.78 301.05,219.70 300.80,219.73 300.55,219.86 300.30,220.00 300.05,219.93 299.80,219.94 299.55,219.91 299.30,220.05 299.05,219.87 298.80,220.03 298.55,220.60 298.30,221.52 298.05,222.43 297.80,224.26 297.55,227.01 297.30,229.58 297.05,230.58 296.80,231.59 296.55,232.59 296.30,233.60 296.05,234.63 295.80,235.66 295.55,236.69 295.30,238.93 295.05,241.31 294.80,246.28 294.55,255.08 294.30,255.08 294.05,255.08 293.80,255.08 293.55,255.08 293.30,255.08 293.05,255.08 292.80,219.83 292.55,219.89 292.30,220.06 292.05,219.79 291.80,219.94 291.55,219.74 291.30,219.73 291.05,219.97 290.80,219.73 290.55,219.97 290.30,219.99 290.05,219.77 289.80,220.00 289.55,219.85 289.30,219.79 289.05,219.75 288.80,219.91 288.55,220.01 288.30,219.80 288.05,219.92 287.80,219.80 287.55,219.95 287.30,219.92 287.05,220.07 286.80,220.84 286.55,221.74 286.30,222.64 286.05,224.99 285.80,227.69 285.55,229.71 285.30,230.70 285.05,231.69 284.80,232.68 284.55,233.68 284.30,234.69 284.05,235.71 283.80,236.99 283.55,239.33 283.30,242.24 283.05,247.42 282.80,254.54 282.55,254.54 282.30,254.54 282.05,254.54 281.80,254.54 281.55,254.54 281.30,254.54 281.05,219.95 280.80,219.75 280.55,220.08 280.30,219.81 280.05,219.75 279.80,219.99 279.55,220.09 279.30,219.96 279.05,219.78 278.80,220.04 278.55,219.71 278.30,219.98 278.05,220.11 277.80,220.10 277.55,219.99 277.30,219.70 277.05,219.97 276.80,220.02 276.55,220.03 276.30,219.79 276.05,219.72 275.80,220.03 275.55,219.94 275.30,220.20 275.05,221.10 274.80,221.99 274.55,223.07 274.30,225.75 274.05,228.44 273.80,229.93 273.55,230.92 273.30,231.90 273.05,232.89 272.80,233.89 272.55,234.89 272.30,235.90 272.05,237.57 271.80,239.90 271.55,243.64 271.30,248.78 271.05,254.31 270.80,254.31 270.55,254.31 270.30,254.31 270.05,254.31 269.80,254.31 269.55,254.31 269.30,219.87 269.05,220.02 268.80,219.70 268.55,219.92 268.30,220.06 268.05,220.07 267.80,219.88 267.55,219.80 267.30,219.71 267.05,219.94 266.80,220.00 266.55,219.84 266.30,219.89 266.05,219.91 265.80,219.81 265.55,219.83 265.30,219.91 265.05,219.82 264.80,220.01 264.55,219.74 264.30,220.00 264.05,219.94 263.80,219.96 263.55,220.52 263.30,221.44 263.05,222.35 262.80,224.01 262.55,226.76 262.30,229.51 262.05,230.52 261.80,231.53 261.55,232.54 261.30,233.55 261.05,234.58 260.80,235.62 260.55,236.65 260.30,238.76 260.05,241.15 259.80,245.85 259.55,255.21 259.30,255.21 259.05,255.21 258.80,255.21 258.55,255.21 258.30,255.21 258.05,255.21 257.80,255.21 257.55,219.90 257.30,220.10 257.05,219.80 256.80,219.94 256.55,220.07 256.30,220.09 256.05,219.85 255.80,220.10 255.55,219.81 255.30,219.79 255.05,219.87 254.80,219.85 254.55,220.06 254.30,219.95 254.05,219.75 253.80,219.95 253.55,219.93 253.30,219.74 253.05,219.69 252.80,220.07 252.55,219.84 252.30,219.95 252.05,220.10 251.80,220.78 251.55,221.69 251.30,222.60 251.05,224.78 250.80,227.51 250.55,229.72 250.30,230.72 250.05,231.72 249.80,232.72 249.55,233.73 249.30,234.76 249.05,235.78 248.80,236.94 248.55,239.30 248.30,241.96 248.05,247.19 247.80,254.90 247.55,254.90 247.30,254.90 247.05,254.90 246.80,254.90 246.55,254.90 246.30,254.90 246.05,220.07 245.80,219.79 245.55,219.94 245.30,219.95 245.05,219.85 244.80,219.89 244.55,219.70 244.30,219.77 244.05,219.77 243.80,219.82 243.55,219.75 243.30,219.71 243.05,219.79 242.80,219.89 242.55,219.71 242.30,219.95 242.05,219.98 241.80,219.78 241.55,219.96 241.30,219.88 241.05,219.76 240.80,219.70 240.55,219.99 240.30,220.17 240.05,221.10 239.80,222.03 239.55,222.96 239.30,225.75 239.05,228.54 238.80,230.26 238.55,231.29 238.30,232.31 238.05,233.33 237.80,234.37 237.55,235.41 237.30,236.46 237.05,238.05 236.80,240.47 236.55,244.05 236.30,249.40 236.05,255.67 235.80,255.67 235.55,255.67 235.30,255.67 235.05,255.67 234.80,255.67 234.55,255.67 234.30,220.00 234.05,219.96 233.80,219.84 233.55,220.03 233.30,219.96 233.05,220.03 232.80,219.88 232.55,219.97 232.30,219.80 232.05,219.92 231.80,219.69 231.55,219.93 231.30,219.96 231.05,220.09 230.80,219.81 230.55,219.98 230.30,220.01 230.05,219.89 229.80,219.81 229.55,219.99 229.30,219.84 229.05,220.01 228.80,219.97 228.55,220.45 228.30,221.38 228.05,222.31 227.80,223.80 227.55,226.59 227.30,229.38 227.05,230.58 226.80,231.60 226.55,232.63 226.30,233.65 226.05,234.70 225.80,235.74 225.55,236.79 225.30,238.79 225.05,241.21 224.80,245.68 224.55,255.70 224.30,255.70 224.05,255.70 223.80,255.70 223.55,255.70 223.30,255.70 223.05,255.70 222.80,255.70 222.55,219.88 222.30,219.81 222.05,220.04 221.80,219.75 221.55,219.87 221.30,219.73 221.05,220.02 220.80,219.95 220.55,220.09 220.30,220.00 220.05,219.74 219.80,220.04 219.55,219.90 219.30,219.70 219.05,220.07 218.80,219.71 218.55,219.87 218.30,219.88 218.05,220.04 217.80,219.94 217.55,219.79 217.30,219.86 217.05,219.91 216.80,220.71 216.55,221.63 216.30,222.56 216.05,224.58 215.80,227.35 215.55,229.76 215.30,230.78 215.05,231.79 214.80,232.80 214.55,233.82 214.30,234.86 214.05,235.90 213.80,236.93 213.55,239.33 213.30,241.73 213.05,247.03 212.80,255.37 212.55,255.37 212.30,255.37 212.05,255.37 211.80,255.37 211.55,255.37 211.30,255.37 211.05,220.02 210.80,219.91 210.55,219.84 210.30,219.83 210.05,220.09 209.80,220.08 209.55,220.01 209.30,219.77 209.05,220.09 208.80,219.77 208.55,219.71 208.30,219.69 208.05,219.93 207.80,219.84 207.55,220.02 207.30,219.70 207.05,220.04 206.80,220.00 206.55,219.70 206.30,220.10 206.05,219.72 205.80,219.99 205.55,220.09 205.30,220.27 205.05,220.28 204.80,220.18 204.55,220.08 204.30,219.98 204.05,219.97 203.80,219.77" fill="#118bbe" stroke="#118bbe" stroke-width="0.5" stroke-linejoin="round"/></g>
<line x1="204.50" y1="260.5" x2="204.50" y2="264.6" stroke="#1a1a1a" stroke-width="0.95"/>
<text x="204.70" y="275.00" text-anchor="middle" textLength="5.87" lengthAdjust="spacingAndGlyphs">0</text>
<line x1="240.37" y1="260.5" x2="240.37" y2="264.6" stroke="#1a1a1a" stroke-width="0.95"/>
<text x="240.57" y="275.00" text-anchor="middle" textLength="5.87" lengthAdjust="spacingAndGlyphs">1</text>
<line x1="276.24" y1="260.5" x2="276.24" y2="264.6" stroke="#1a1a1a" stroke-width="0.95"/>
<text x="276.44" y="275.00" text-anchor="middle" textLength="5.87" lengthAdjust="spacingAndGlyphs">2</text>
<line x1="312.11" y1="260.5" x2="312.11" y2="264.6" stroke="#1a1a1a" stroke-width="0.95"/>
<text x="312.31" y="275.00" text-anchor="middle" textLength="5.87" lengthAdjust="spacingAndGlyphs">3</text>
<line x1="347.98" y1="260.5" x2="347.98" y2="264.6" stroke="#1a1a1a" stroke-width="0.95"/>
<text x="348.18" y="275.00" text-anchor="middle" textLength="5.87" lengthAdjust="spacingAndGlyphs">4</text>
<line x1="383.85" y1="260.5" x2="383.85" y2="264.6" stroke="#1a1a1a" stroke-width="0.95"/>
<text x="384.05" y="275.00" text-anchor="middle" textLength="5.87" lengthAdjust="spacingAndGlyphs">5</text>
<line x1="419.72" y1="260.5" x2="419.72" y2="264.6" stroke="#1a1a1a" stroke-width="0.95"/>
<text x="419.92" y="275.00" text-anchor="middle" textLength="5.87" lengthAdjust="spacingAndGlyphs">6</text>
<line x1="455.59" y1="260.5" x2="455.59" y2="264.6" stroke="#1a1a1a" stroke-width="0.95"/>
<text x="455.79" y="275.00" text-anchor="middle" textLength="5.87" lengthAdjust="spacingAndGlyphs">7</text>
<line x1="491.46" y1="260.5" x2="491.46" y2="264.6" stroke="#1a1a1a" stroke-width="0.95"/>
<text x="491.66" y="275.00" text-anchor="middle" textLength="5.87" lengthAdjust="spacingAndGlyphs">8</text>
<line x1="186.4" y1="181.20" x2="190.5" y2="181.20" stroke="#1a1a1a" stroke-width="0.95"/>
<text x="182.10" y="185.10" text-anchor="end" textLength="5.87" lengthAdjust="spacingAndGlyphs">1</text>
<line x1="186.4" y1="218.50" x2="190.5" y2="218.50" stroke="#1a1a1a" stroke-width="0.95"/>
<text x="183.30" y="222.40" text-anchor="end" textLength="5.87" lengthAdjust="spacingAndGlyphs">0</text>
<line x1="186.4" y1="256.30" x2="190.5" y2="256.30" stroke="#1a1a1a" stroke-width="0.95"/>
<text x="181.00" y="260.20" text-anchor="end" textLength="14.11" lengthAdjust="spacingAndGlyphs">−1</text>
<text x="161.00" y="220.80" text-anchor="middle" textLength="33.00" lengthAdjust="spacingAndGlyphs" transform="rotate(-90 161.00 220.80)">pulses</text>
<text x="347.50" y="289.50" text-anchor="middle" textLength="51.94" lengthAdjust="spacingAndGlyphs">time (sec)</text>
<rect x="640.5" y="81.5" width="315" height="81" fill="#fff" stroke="#1a1a1a" stroke-width="0.95"/>
<polygon points="653.67,101.27 654.17,94.27 654.67,89.20 655.17,90.75 655.67,88.09 656.17,84.27 656.67,86.14 657.17,88.82 657.67,91.87 658.17,98.49 658.67,98.67 659.17,101.22 659.67,105.66 660.17,105.06 660.67,108.53 661.17,112.43 661.67,114.30 662.17,113.50 662.67,110.37 663.17,110.65 663.67,108.33 664.17,108.99 664.67,110.88 665.17,112.78 665.67,111.61 666.17,109.54 666.67,107.20 667.17,107.29 667.67,106.30 668.17,106.78 668.67,109.98 669.17,111.83 669.67,113.89 670.17,113.48 670.67,114.86 671.17,114.28 671.67,114.18 672.17,112.60 672.67,111.27 673.17,106.48 673.67,102.35 674.17,102.16 674.67,101.44 675.17,101.25 675.67,103.72 676.17,103.26 676.67,106.29 677.17,106.45 677.67,106.36 678.17,110.35 678.67,112.71 679.17,114.49 679.67,115.56 680.17,115.52 680.67,115.08 681.17,113.12 681.67,113.53 682.17,113.41 682.67,113.65 683.17,111.43 683.67,110.46 684.17,109.34 684.67,108.13 685.17,108.97 685.67,105.94 686.17,107.90 686.67,108.50 687.17,110.53 687.67,111.69 688.17,113.01 688.67,113.29 689.17,114.88 689.67,116.47 690.17,116.12 690.67,117.30 691.17,115.08 691.67,113.35 692.17,110.37 692.67,109.49 693.17,109.99 693.67,108.59 694.17,110.64 694.67,110.27 695.17,109.61 695.67,110.44 696.17,108.10 696.67,107.34 697.17,109.90 697.67,108.89 698.17,110.73 698.67,110.53 699.17,108.91 699.67,110.84 700.17,108.60 700.67,110.50 701.17,110.13 701.67,111.34 702.17,111.37 702.67,112.06 703.17,112.06 703.67,110.87 704.17,109.86 704.67,109.12 705.17,108.56 705.67,108.11 706.17,109.99 706.67,109.11 707.17,109.28 707.67,111.39 708.17,112.24 708.67,113.77 709.17,114.16 709.67,114.85 710.17,115.02 710.67,115.83 711.17,114.35 711.67,114.23 712.17,114.72 712.67,116.63 713.17,117.28 713.67,117.67 714.17,117.64 714.67,118.83 715.17,118.82 715.67,117.31 716.17,117.84 716.67,117.72 717.17,117.86 717.67,117.86 718.17,118.77 718.67,119.29 719.17,119.20 719.67,119.92 720.17,119.79 720.67,119.59 721.17,119.52 721.67,119.70 722.17,119.50 722.67,119.39 723.17,119.11 723.67,118.80 724.17,119.05 724.67,118.49 725.17,117.74 725.67,117.59 726.17,118.14 726.67,118.17 727.17,117.40 727.67,117.11 728.17,117.06 728.67,117.78 729.17,117.84 729.67,116.79 730.17,117.61 730.67,116.52 731.17,117.58 731.67,117.39 732.17,116.59 732.67,116.15 733.17,116.29 733.67,117.42 734.17,119.14 734.67,119.83 735.17,120.64 735.67,120.58 736.17,121.11 736.67,121.41 737.17,121.44 737.67,121.89 738.17,121.96 738.67,122.15 739.17,121.78 739.67,121.96 740.17,121.90 740.67,121.51 741.17,121.23 741.67,120.57 742.17,120.75 742.67,119.76 743.17,119.82 743.67,119.73 744.17,119.42 744.67,119.00 745.17,118.60 745.67,119.58 746.17,120.07 746.67,120.36 747.17,120.96 747.67,120.93 748.17,120.91 748.67,120.57 749.17,120.48 749.67,120.12 750.17,120.03 750.67,119.64 751.17,120.35 751.67,120.79 752.17,121.43 752.67,121.81 753.17,122.16 753.67,121.75 754.17,121.21 754.67,121.20 755.17,121.07 755.67,120.47 756.17,121.06 756.67,121.34 757.17,121.43 757.67,122.10 758.17,122.25 758.67,122.24 759.17,122.60 759.67,122.54 760.17,122.74 760.67,122.56 761.17,122.80 761.67,122.99 762.17,123.13 762.67,122.95 763.17,122.94 763.67,122.99 764.17,123.14 764.67,123.03 765.17,123.09 765.67,122.66 766.17,122.61 766.67,122.44 767.17,122.15 767.67,122.02 768.17,121.79 768.67,121.89 769.17,121.51 769.67,121.23 770.17,121.46 770.67,121.18 771.17,121.02 771.67,121.12 772.17,121.43 772.67,121.16 773.17,121.34 773.67,121.76 774.17,121.60 774.67,121.86 775.17,121.79 775.67,122.07 776.17,122.03 776.67,122.18 777.17,122.25 777.67,122.21 778.17,121.84 778.67,122.08 779.17,121.92 779.67,121.67 780.17,121.75 780.67,121.85 781.17,121.78 781.67,121.95 782.17,121.65 782.67,121.64 783.17,120.64 783.67,121.22 784.17,121.27 784.67,121.36 785.17,121.33 785.67,121.72 786.17,122.39 786.67,121.95 787.17,122.20 787.67,122.59 788.17,122.83 788.67,122.53 789.17,122.73 789.67,122.67 790.17,122.84 790.67,123.27 791.17,123.17 791.67,123.01 792.17,123.14 792.67,122.95 793.17,122.87 793.67,122.84 794.17,122.95 794.67,122.93 795.17,122.91 795.67,122.98 796.17,123.33 796.67,123.36 797.17,123.32 797.67,123.05 798.17,123.20 798.67,123.27 799.17,123.05 799.67,123.36 800.17,123.09 800.67,123.26 801.17,123.14 801.67,123.44 802.17,123.04 802.67,123.20 803.17,123.32 803.67,123.22 804.17,123.41 804.67,123.33 805.17,123.39 805.67,123.18 806.17,123.04 806.67,123.20 807.17,123.39 807.67,123.28 808.17,123.15 808.67,123.06 809.17,123.32 809.67,123.00 810.17,122.96 810.67,122.88 811.17,123.24 811.67,122.93 812.17,123.19 812.67,123.01 813.17,123.07 813.67,123.37 814.17,123.31 814.67,123.37 815.17,122.93 815.67,122.90 816.17,123.00 816.67,122.94 817.17,123.27 817.67,122.95 818.17,123.29 818.67,123.39 819.17,123.29 819.67,122.99 820.17,123.10 820.67,123.06 821.17,123.02 821.67,123.28 822.17,123.11 822.67,123.37 823.17,123.15 823.67,123.16 824.17,123.28 824.67,123.18 825.17,123.30 825.67,123.21 826.17,123.43 826.67,123.25 827.17,123.15 827.67,123.15 828.17,123.42 828.67,123.56 829.17,123.16 829.67,123.35 830.17,123.58 830.67,123.52 831.17,123.57 831.67,123.38 832.17,123.55 832.67,123.57 833.17,123.49 833.67,123.42 834.17,123.46 834.67,123.62 835.17,123.36 835.67,123.71 836.17,123.64 836.67,123.70 837.17,123.65 837.67,123.50 838.17,123.46 838.67,123.63 839.17,123.60 839.67,123.46 840.17,123.48 840.67,123.58 841.17,123.51 841.67,123.66 842.17,123.77 842.67,123.51 843.17,123.54 843.67,123.71 844.17,123.41 844.67,123.63 845.17,123.71 845.67,123.43 846.17,123.45 846.67,123.56 847.17,123.59 847.67,123.43 848.17,123.42 848.67,123.49 849.17,123.41 849.67,123.68 850.17,123.72 850.67,123.51 851.17,123.59 851.67,123.78 852.17,123.69 852.67,123.66 853.17,123.50 853.67,123.75 854.17,123.63 854.67,123.74 855.17,123.52 855.67,123.41 856.17,123.65 856.67,123.69 857.17,123.63 857.67,123.71 858.17,123.75 858.67,123.54 859.17,123.77 859.67,123.61 860.17,123.86 860.67,123.74 861.17,123.92 861.67,123.69 862.17,123.64 862.67,123.66 863.17,123.93 863.67,123.87 864.17,124.00 864.67,124.00 865.17,123.97 865.67,123.93 866.17,124.06 866.67,123.91 867.17,123.84 867.67,124.05 868.17,123.92 868.67,124.00 869.17,124.01 869.67,124.12 870.17,124.01 870.67,123.95 871.17,124.01 871.67,123.98 872.17,124.08 872.67,124.15 873.17,124.02 873.67,124.06 874.17,124.11 874.67,124.00 875.17,123.96 875.67,124.12 876.17,124.10 876.67,124.00 877.17,124.06 877.67,124.07 878.17,124.09 878.67,124.04 879.17,124.19 879.67,124.13 880.17,124.01 880.67,124.07 881.17,124.01 881.67,124.14 882.17,124.15 882.67,124.01 883.17,124.16 883.67,124.17 884.17,124.18 884.67,124.22 885.17,124.20 885.67,124.12 886.17,124.05 886.67,124.06 887.17,124.19 887.67,124.24 888.17,124.14 888.67,124.13 889.17,124.21 889.67,124.23 890.17,124.22 890.67,124.11 891.17,124.24 891.67,124.10 892.17,124.23 892.67,124.08 893.17,124.06 893.67,124.19 894.17,124.19 894.67,124.22 895.17,124.25 895.67,124.21 896.17,124.27 896.67,124.09 897.17,124.08 897.67,124.22 898.17,124.19 898.67,124.23 899.17,124.23 899.67,124.14 900.17,124.21 900.67,124.21 901.17,124.13 901.67,124.18 902.17,124.13 902.67,124.11 903.17,124.28 903.67,124.27 904.17,124.11 904.67,124.14 905.17,124.31 905.67,124.15 906.17,124.18 906.67,124.16 907.17,124.21 907.67,124.29 908.17,124.26 908.67,124.25 909.17,124.25 909.67,124.13 910.17,124.15 910.67,124.27 911.17,124.28 911.67,124.23 912.17,124.26 912.67,124.28 913.17,124.24 913.67,124.23 914.17,124.14 914.67,124.25 915.17,124.32 915.67,124.17 916.17,124.33 916.67,124.27 917.17,124.27 917.67,124.24 918.17,124.26 918.67,124.21 919.17,124.29 919.67,124.27 920.17,124.22 920.67,124.24 921.17,124.31 921.67,124.23 922.17,124.34 922.67,124.30 923.17,124.25 923.67,124.25 924.17,124.20 924.67,124.18 925.17,124.23 925.67,124.19 926.17,124.27 926.67,124.31 927.17,124.21 927.67,124.35 928.17,124.30 928.67,124.21 929.17,124.32 929.67,124.27 930.17,124.25 930.67,124.29 931.17,124.19 931.67,124.35 932.17,124.24 932.67,124.35 933.17,124.29 933.67,124.21 934.17,124.32 934.67,124.27 935.17,124.34 935.67,124.35 936.17,124.35 936.67,124.29 937.17,124.35 937.67,124.30 938.17,124.29 938.67,124.21 939.17,124.29 939.67,124.34 940.17,124.35 940.67,124.28 941.17,124.25 941.17,125.57 940.67,125.47 940.17,125.51 939.67,125.57 939.17,125.45 938.67,125.53 938.17,125.46 937.67,125.57 937.17,125.46 936.67,125.52 936.17,125.59 935.67,125.53 935.17,125.49 934.67,125.58 934.17,125.50 933.67,125.57 933.17,125.50 932.67,125.45 932.17,125.61 931.67,125.51 931.17,125.56 930.67,125.45 930.17,125.55 929.67,125.51 929.17,125.50 928.67,125.47 928.17,125.45 927.67,125.45 927.17,125.55 926.67,125.47 926.17,125.61 925.67,125.51 925.17,125.46 924.67,125.53 924.17,125.60 923.67,125.58 923.17,125.62 922.67,125.45 922.17,125.51 921.67,125.47 921.17,125.52 920.67,125.48 920.17,125.62 919.67,125.52 919.17,125.55 918.67,125.53 918.17,125.63 917.67,125.63 917.17,125.50 916.67,125.65 916.17,125.63 915.67,125.61 915.17,125.55 914.67,125.59 914.17,125.57 913.67,125.64 913.17,125.56 912.67,125.66 912.17,125.60 911.67,125.62 911.17,125.50 910.67,125.67 910.17,125.64 909.67,125.66 909.17,125.60 908.67,125.54 908.17,125.58 907.67,125.60 907.17,125.57 906.67,125.50 906.17,125.59 905.67,125.69 905.17,125.66 904.67,125.51 904.17,125.57 903.67,125.50 903.17,125.54 902.67,125.66 902.17,125.53 901.67,125.69 901.17,125.53 900.67,125.61 900.17,125.61 899.67,125.62 899.17,125.66 898.67,125.51 898.17,125.65 897.67,125.71 897.17,125.56 896.67,125.72 896.17,125.55 895.67,125.71 895.17,125.54 894.67,125.55 894.17,125.74 893.67,125.55 893.17,125.64 892.67,125.54 892.17,125.71 891.67,125.57 891.17,125.54 890.67,125.68 890.17,125.76 889.67,125.74 889.17,125.76 888.67,125.55 888.17,125.61 887.67,125.61 887.17,125.77 886.67,125.55 886.17,125.70 885.67,125.73 885.17,125.58 884.67,125.61 884.17,125.79 883.67,125.60 883.17,125.66 882.67,125.79 882.17,125.63 881.67,125.77 881.17,125.62 880.67,125.62 880.17,125.81 879.67,125.71 879.17,125.74 878.67,125.81 878.17,125.66 877.67,125.72 877.17,125.60 876.67,125.82 876.17,125.81 875.67,125.73 875.17,125.64 874.67,125.71 874.17,125.72 873.67,125.71 873.17,125.86 872.67,125.66 872.17,125.74 871.67,125.77 871.17,125.85 870.67,125.74 870.17,125.85 869.67,125.64 869.17,125.72 868.67,125.88 868.17,125.89 867.67,125.72 867.17,125.93 866.67,125.91 866.17,125.85 865.67,125.82 865.17,126.00 864.67,125.86 864.17,125.95 863.67,125.90 863.17,125.81 862.67,125.83 862.17,126.10 861.67,126.01 861.17,125.93 860.67,125.93 860.17,126.08 859.67,125.91 859.17,126.01 858.67,126.23 858.17,126.12 857.67,126.28 857.17,126.18 856.67,126.16 856.17,126.06 855.67,126.35 855.17,126.39 854.67,126.30 854.17,126.04 853.67,126.12 853.17,126.12 852.67,126.29 852.17,126.17 851.67,126.30 851.17,126.25 850.67,126.12 850.17,126.04 849.67,126.37 849.17,126.36 848.67,126.16 848.17,126.19 847.67,126.36 847.17,126.17 846.67,126.37 846.17,126.39 845.67,126.29 845.17,126.07 844.67,126.04 844.17,126.14 843.67,126.14 843.17,126.24 842.67,126.17 842.17,126.22 841.67,126.19 841.17,126.04 840.67,126.19 840.17,126.09 839.67,126.24 839.17,126.06 838.67,126.27 838.17,126.39 837.67,126.31 837.17,126.40 836.67,126.26 836.17,126.45 835.67,126.49 835.17,126.14 834.67,126.14 834.17,126.19 833.67,126.46 833.17,126.47 832.67,126.38 832.17,126.57 831.67,126.16 831.17,126.45 830.67,126.20 830.17,126.48 829.67,126.24 829.17,126.25 828.67,126.40 828.17,126.39 827.67,126.57 827.17,126.45 826.67,126.67 826.17,126.66 825.67,126.31 825.17,126.64 824.67,126.29 824.17,126.36 823.67,126.48 823.17,126.59 822.67,126.38 822.17,126.55 821.67,126.43 821.17,126.50 820.67,126.60 820.17,126.70 819.67,126.43 819.17,126.69 818.67,126.55 818.17,126.79 817.67,126.41 817.17,126.68 816.67,126.39 816.17,126.86 815.67,126.64 815.17,126.50 814.67,126.74 814.17,126.42 813.67,126.46 813.17,126.42 812.67,126.94 812.17,126.48 811.67,126.77 811.17,126.57 810.67,126.58 810.17,126.67 809.67,126.56 809.17,126.44 808.67,126.59 808.17,126.49 807.67,126.45 807.17,126.91 806.67,126.60 806.17,126.42 805.67,126.60 805.17,126.39 804.67,126.63 804.17,126.43 803.67,126.46 803.17,126.46 802.67,126.46 802.17,126.43 801.67,126.46 801.17,126.47 800.67,126.62 800.17,126.53 799.67,126.81 799.17,126.57 798.67,126.61 798.17,126.71 797.67,126.67 797.17,126.66 796.67,126.51 796.17,126.43 795.67,126.68 795.17,126.66 794.67,126.94 794.17,126.63 793.67,126.85 793.17,126.79 792.67,126.54 792.17,126.96 791.67,127.01 791.17,126.54 790.67,126.71 790.17,126.87 789.67,126.67 789.17,127.32 788.67,127.13 788.17,127.30 787.67,127.46 787.17,127.55 786.67,127.71 786.17,128.09 785.67,128.20 785.17,128.11 784.67,128.05 784.17,128.89 783.67,128.61 783.17,128.52 782.67,127.54 782.17,127.16 781.67,127.22 781.17,127.33 780.67,127.15 780.17,127.11 779.67,127.30 779.17,127.25 778.67,126.99 778.17,127.14 777.67,126.88 777.17,126.89 776.67,127.03 776.17,127.11 775.67,127.07 775.17,127.15 774.67,127.20 774.17,127.21 773.67,127.50 773.17,127.65 772.67,127.90 772.17,128.15 771.67,128.02 771.17,128.01 770.67,127.89 770.17,127.79 769.67,127.37 769.17,127.20 768.67,127.34 768.17,127.06 767.67,126.72 767.17,126.68 766.67,126.40 766.17,126.16 765.67,126.09 765.17,125.90 764.67,125.86 764.17,125.88 763.67,125.92 763.17,125.89 762.67,125.88 762.17,126.07 761.67,126.09 761.17,126.05 760.67,126.17 760.17,126.27 759.67,126.38 759.17,126.50 758.67,126.76 758.17,126.82 757.67,127.24 757.17,127.24 756.67,127.67 756.17,128.19 755.67,128.34 755.17,128.02 754.67,127.60 754.17,127.19 753.67,127.03 753.17,126.76 752.67,126.90 752.17,127.48 751.67,127.80 751.17,128.67 750.67,128.99 750.17,129.02 749.67,128.72 749.17,128.81 748.67,128.58 748.17,128.24 747.67,128.16 747.17,128.14 746.67,128.62 746.17,129.45 745.67,129.96 745.17,130.81 744.67,130.08 744.17,129.97 743.67,129.31 743.17,129.22 742.67,128.67 742.17,128.40 741.67,127.70 741.17,127.55 740.67,127.11 740.17,126.80 739.67,126.60 739.17,126.83 738.67,127.02 738.17,127.15 737.67,127.30 737.17,127.56 736.67,127.99 736.17,128.07 735.67,128.77 735.17,128.77 734.67,129.72 734.17,129.92 733.67,131.73 733.17,132.06 732.67,132.69 732.17,132.95 731.67,132.90 731.17,132.83 730.67,131.92 730.17,131.70 729.67,131.51 729.17,131.51 728.67,131.90 728.17,131.76 727.67,131.80 727.17,131.96 726.67,131.79 726.17,131.30 725.67,131.45 725.17,130.84 724.67,131.15 724.17,130.52 723.67,130.63 723.17,130.08 722.67,130.33 722.17,130.16 721.67,129.69 721.17,129.70 720.67,129.45 720.17,129.82 719.67,129.65 719.17,130.01 718.67,130.55 718.17,130.71 717.67,131.12 717.17,131.64 716.67,131.39 716.17,131.72 715.67,131.61 715.17,130.33 714.67,130.45 714.17,130.64 713.67,131.46 713.17,132.01 712.67,132.46 712.17,134.06 711.67,133.23 711.17,134.72 710.67,134.97 710.17,135.53 709.67,135.06 709.17,136.73 708.67,137.97 708.17,137.90 707.67,140.46 707.17,140.66 706.67,141.23 706.17,141.99 705.67,141.04 705.17,141.38 704.67,140.19 704.17,137.93 703.67,137.80 703.17,137.05 702.67,138.23 702.17,139.24 701.67,140.93 701.17,140.36 700.67,142.97 700.17,142.79 699.67,142.40 699.17,140.02 698.67,140.44 698.17,140.54 697.67,140.23 697.17,140.36 696.67,140.58 696.17,141.13 695.67,139.94 695.17,141.14 694.67,139.26 694.17,138.85 693.67,139.44 693.17,139.45 692.67,137.46 692.17,137.17 691.67,135.77 691.17,134.06 690.67,133.94 690.17,134.33 689.67,134.99 689.17,136.64 688.67,136.25 688.17,137.98 687.67,139.71 687.17,140.30 686.67,141.60 686.17,141.32 685.67,141.98 685.17,138.96 684.67,139.97 684.17,138.14 683.67,137.48 683.17,135.77 682.67,135.91 682.17,135.36 681.67,134.13 681.17,134.72 680.67,134.08 680.17,134.43 679.67,133.81 679.17,135.20 678.67,136.38 678.17,138.99 677.67,141.34 677.17,144.81 676.67,145.80 676.17,144.60 675.67,147.16 675.17,147.32 674.67,146.37 674.17,146.99 673.67,144.01 673.17,139.43 672.67,136.18 672.17,135.34 671.67,136.70 671.17,135.54 670.67,136.76 670.17,137.12 669.67,136.26 669.17,138.76 668.67,140.22 668.17,142.31 667.67,141.90 667.17,138.43 666.67,138.85 666.17,138.08 665.67,137.38 665.17,136.70 664.67,137.33 664.17,138.14 663.67,138.11 663.17,137.30 662.67,136.37 662.17,137.12 661.67,135.92 661.17,136.39 660.67,136.57 660.17,136.07 659.67,136.79 659.17,140.97 658.67,143.29 658.17,149.24 657.67,152.60 657.17,152.02 656.67,155.30 656.17,156.50 655.67,154.96 655.17,154.58 654.67,147.84 654.17,144.94 653.67,136.28" fill="#118bbe" stroke="#118bbe" stroke-width="0.6" stroke-linejoin="round"/>
<rect x="940.3" y="123.0" width="1.5" height="4.4" fill="#118bbe"/>
<line x1="654.80" y1="162.5" x2="654.80" y2="166.6" stroke="#1a1a1a" stroke-width="0.95"/>
<text x="655.00" y="177.80" text-anchor="middle" textLength="20.55" lengthAdjust="spacingAndGlyphs">0.00</text>
<line x1="704.45" y1="162.5" x2="704.45" y2="166.6" stroke="#1a1a1a" stroke-width="0.95"/>
<text x="704.65" y="177.80" text-anchor="middle" textLength="20.55" lengthAdjust="spacingAndGlyphs">0.05</text>
<line x1="754.10" y1="162.5" x2="754.10" y2="166.6" stroke="#1a1a1a" stroke-width="0.95"/>
<text x="754.30" y="177.80" text-anchor="middle" textLength="20.55" lengthAdjust="spacingAndGlyphs">0.10</text>
<line x1="803.75" y1="162.5" x2="803.75" y2="166.6" stroke="#1a1a1a" stroke-width="0.95"/>
<text x="803.95" y="177.80" text-anchor="middle" textLength="20.55" lengthAdjust="spacingAndGlyphs">0.15</text>
<line x1="853.40" y1="162.5" x2="853.40" y2="166.6" stroke="#1a1a1a" stroke-width="0.95"/>
<text x="853.60" y="177.80" text-anchor="middle" textLength="20.55" lengthAdjust="spacingAndGlyphs">0.20</text>
<line x1="903.05" y1="162.5" x2="903.05" y2="166.6" stroke="#1a1a1a" stroke-width="0.95"/>
<text x="903.25" y="177.80" text-anchor="middle" textLength="20.55" lengthAdjust="spacingAndGlyphs">0.25</text>
<line x1="952.70" y1="162.5" x2="952.70" y2="166.6" stroke="#1a1a1a" stroke-width="0.95"/>
<text x="952.90" y="177.80" text-anchor="middle" textLength="20.55" lengthAdjust="spacingAndGlyphs">0.30</text>
<line x1="636.4" y1="85.30" x2="640.5" y2="85.30" stroke="#1a1a1a" stroke-width="0.95"/>
<text x="632.10" y="89.20" text-anchor="end" textLength="5.87" lengthAdjust="spacingAndGlyphs">1</text>
<line x1="636.4" y1="125.30" x2="640.5" y2="125.30" stroke="#1a1a1a" stroke-width="0.95"/>
<text x="633.30" y="129.20" text-anchor="end" textLength="5.87" lengthAdjust="spacingAndGlyphs">0</text>
<text x="620.00" y="124.00" text-anchor="middle" textLength="32.76" lengthAdjust="spacingAndGlyphs" transform="rotate(-90 620.00 124.00)">profile</text>
<rect x="640.5" y="179.5" width="315" height="81" fill="#fff" stroke="#1a1a1a" stroke-width="0.95"/>
<polygon points="653.33,200.84 653.83,190.54 654.33,189.10 654.83,181.95 655.33,184.99 655.83,190.61 656.33,191.04 656.83,190.94 657.33,193.08 657.83,191.90 658.33,191.53 658.83,192.83 659.33,194.42 659.83,192.40 660.33,193.85 660.83,195.64 661.33,196.74 661.83,198.26 662.33,197.41 662.83,200.45 663.33,202.85 663.83,201.94 664.33,204.27 664.83,206.01 665.33,208.36 665.83,210.13 666.33,210.67 666.83,210.49 667.33,211.06 667.83,209.65 668.33,207.79 668.83,207.25 669.33,208.40 669.83,208.89 670.33,210.17 670.83,209.67 671.33,201.99 671.83,199.20 672.33,200.09 672.83,199.67 673.33,200.41 673.83,202.29 674.33,202.19 674.83,202.90 675.33,202.70 675.83,202.38 676.33,201.26 676.83,199.19 677.33,198.94 677.83,197.77 678.33,198.92 678.83,198.29 679.33,199.84 679.83,200.59 680.33,200.75 680.83,197.87 681.33,194.25 681.83,193.99 682.33,194.37 682.83,199.20 683.33,200.06 683.83,198.57 684.33,202.39 684.83,202.59 685.33,202.30 685.83,203.75 686.33,204.05 686.83,205.73 687.33,204.62 687.83,205.39 688.33,204.97 688.83,204.61 689.33,204.87 689.83,204.42 690.33,205.92 690.83,204.72 691.33,204.23 691.83,203.62 692.33,205.16 692.83,204.58 693.33,205.54 693.83,206.14 694.33,206.82 694.83,208.50 695.33,208.11 695.83,209.90 696.33,210.65 696.83,210.75 697.33,208.27 697.83,206.68 698.33,207.64 698.83,209.76 699.33,211.16 699.83,211.15 700.33,210.44 700.83,208.13 701.33,206.54 701.83,206.36 702.33,207.62 702.83,210.89 703.33,211.79 703.83,213.44 704.33,213.39 704.83,212.42 705.33,210.70 705.83,209.87 706.33,207.77 706.83,207.27 707.33,211.44 707.83,212.94 708.33,214.07 708.83,214.07 709.33,213.39 709.83,213.75 710.33,213.62 710.83,213.63 711.33,213.58 711.83,213.19 712.33,213.10 712.83,213.31 713.33,212.45 713.83,212.80 714.33,212.31 714.83,212.69 715.33,212.29 715.83,211.43 716.33,208.95 716.83,207.05 717.33,206.16 717.83,208.13 718.33,209.17 718.83,210.68 719.33,211.09 719.83,211.70 720.33,211.02 720.83,210.54 721.33,210.05 721.83,210.09 722.33,211.24 722.83,212.72 723.33,213.90 723.83,214.70 724.33,215.06 724.83,215.27 725.33,215.56 725.83,215.96 726.33,215.83 726.83,215.93 727.33,215.91 727.83,215.61 728.33,215.35 728.83,215.29 729.33,214.98 729.83,214.64 730.33,213.92 730.83,213.74 731.33,214.08 731.83,215.01 732.33,215.36 732.83,215.72 733.33,216.05 733.83,216.09 734.33,216.60 734.83,216.73 735.33,216.66 735.83,216.81 736.33,217.09 736.83,217.06 737.33,217.10 737.83,217.00 738.33,217.03 738.83,216.83 739.33,216.87 739.83,216.62 740.33,216.64 740.83,216.40 741.33,216.40 741.83,216.15 742.33,216.00 742.83,215.87 743.33,215.93 743.83,215.60 744.33,215.54 744.83,215.11 745.33,214.91 745.83,215.27 746.33,214.77 746.83,214.65 747.33,214.82 747.83,214.96 748.33,215.00 748.83,215.70 749.33,215.72 749.83,215.84 750.33,216.22 750.83,216.36 751.33,216.24 751.83,216.18 752.33,216.20 752.83,215.82 753.33,215.54 753.83,215.35 754.33,215.05 754.83,215.19 755.33,214.55 755.83,215.30 756.33,215.72 756.83,215.91 757.33,216.10 757.83,216.56 758.33,216.62 758.83,216.63 759.33,216.39 759.83,216.08 760.33,215.95 760.83,215.70 761.33,215.63 761.83,215.68 762.33,215.61 762.83,216.00 763.33,216.17 763.83,216.69 764.33,216.82 764.83,216.92 765.33,216.83 765.83,216.93 766.33,217.09 766.83,217.00 767.33,217.11 767.83,217.00 768.33,217.01 768.83,216.88 769.33,216.94 769.83,217.03 770.33,216.95 770.83,216.93 771.33,216.86 771.83,216.94 772.33,216.76 772.83,216.88 773.33,216.80 773.83,216.66 774.33,216.64 774.83,216.70 775.33,216.71 775.83,216.88 776.33,216.81 776.83,216.69 777.33,216.71 777.83,216.94 778.33,216.97 778.83,216.86 779.33,216.86 779.83,216.91 780.33,216.91 780.83,216.81 781.33,216.88 781.83,216.68 782.33,216.76 782.83,216.74 783.33,216.43 783.83,216.41 784.33,216.52 784.83,216.43 785.33,216.71 785.83,216.36 786.33,216.72 786.83,216.46 787.33,216.68 787.83,216.40 788.33,216.28 788.83,216.75 789.33,216.40 789.83,216.26 790.33,216.37 790.83,216.77 791.33,216.52 791.83,216.53 792.33,216.61 792.83,216.72 793.33,216.47 793.83,216.59 794.33,216.67 794.83,216.40 795.33,216.72 795.83,216.57 796.33,216.83 796.83,216.66 797.33,216.67 797.83,216.79 798.33,216.49 798.83,216.87 799.33,216.52 799.83,216.70 800.33,216.90 800.83,216.85 801.33,216.52 801.83,216.58 802.33,216.81 802.83,216.82 803.33,216.49 803.83,216.70 804.33,216.74 804.83,216.80 805.33,216.61 805.83,216.48 806.33,216.84 806.83,216.66 807.33,216.70 807.83,216.56 808.33,216.68 808.83,216.86 809.33,216.56 809.83,216.51 810.33,216.89 810.83,216.72 811.33,216.83 811.83,216.52 812.33,216.64 812.83,216.66 813.33,216.90 813.83,216.80 814.33,216.56 814.83,216.82 815.33,216.53 815.83,216.85 816.33,216.54 816.83,216.63 817.33,216.69 817.83,216.77 818.33,216.68 818.83,216.76 819.33,216.81 819.83,216.74 820.33,216.71 820.83,216.66 821.33,216.68 821.83,216.64 822.33,216.89 822.83,216.87 823.33,216.92 823.83,217.02 824.33,217.03 824.83,216.69 825.33,217.02 825.83,216.97 826.33,216.79 826.83,216.88 827.33,216.98 827.83,216.99 828.33,216.99 828.83,216.75 829.33,216.86 829.83,216.95 830.33,216.88 830.83,216.80 831.33,217.08 831.83,216.76 832.33,216.82 832.83,216.73 833.33,217.03 833.83,216.93 834.33,216.96 834.83,217.02 835.33,216.81 835.83,216.89 836.33,216.81 836.83,216.90 837.33,216.71 837.83,216.91 838.33,216.92 838.83,216.93 839.33,216.96 839.83,216.83 840.33,216.77 840.83,216.99 841.33,217.05 841.83,216.93 842.33,216.72 842.83,216.85 843.33,216.89 843.83,217.04 844.33,217.08 844.83,216.81 845.33,217.07 845.83,216.71 846.33,216.95 846.83,216.84 847.33,217.02 847.83,216.92 848.33,217.08 848.83,217.00 849.33,216.74 849.83,217.01 850.33,217.08 850.83,216.95 851.33,216.92 851.83,217.12 852.33,217.07 852.83,216.86 853.33,217.01 853.83,216.88 854.33,216.81 854.83,217.04 855.33,217.17 855.83,217.14 856.33,217.06 856.83,216.97 857.33,217.03 857.83,216.89 858.33,217.09 858.83,216.89 859.33,216.93 859.83,217.14 860.33,217.14 860.83,216.94 861.33,217.10 861.83,217.08 862.33,217.22 862.83,217.04 863.33,217.19 863.83,217.27 864.33,217.13 864.83,217.10 865.33,217.14 865.83,217.05 866.33,217.30 866.83,217.34 867.33,217.06 867.83,217.13 868.33,217.17 868.83,217.10 869.33,217.35 869.83,217.16 870.33,217.15 870.83,217.33 871.33,217.32 871.83,217.40 872.33,217.22 872.83,217.41 873.33,217.36 873.83,217.27 874.33,217.19 874.83,217.24 875.33,217.19 875.83,217.19 876.33,217.29 876.83,217.25 877.33,217.24 877.83,217.29 878.33,217.27 878.83,217.25 879.33,217.43 879.83,217.19 880.33,217.27 880.83,217.29 881.33,217.30 881.83,217.28 882.33,217.28 882.83,217.45 883.33,217.35 883.83,217.46 884.33,217.34 884.83,217.46 885.33,217.47 885.83,217.27 886.33,217.30 886.83,217.30 887.33,217.49 887.83,217.27 888.33,217.47 888.83,217.31 889.33,217.34 889.83,217.46 890.33,217.30 890.83,217.40 891.33,217.51 891.83,217.29 892.33,217.40 892.83,217.31 893.33,217.50 893.83,217.45 894.33,217.49 894.83,217.39 895.33,217.42 895.83,217.40 896.33,217.37 896.83,217.54 897.33,217.52 897.83,217.37 898.33,217.41 898.83,217.51 899.33,217.39 899.83,217.46 900.33,217.39 900.83,217.49 901.33,217.53 901.83,217.41 902.33,217.41 902.83,217.47 903.33,217.36 903.83,217.47 904.33,217.43 904.83,217.45 905.33,217.40 905.83,217.47 906.33,217.43 906.83,217.49 907.33,217.43 907.83,217.44 908.33,217.39 908.83,217.41 909.33,217.53 909.83,217.59 910.33,217.55 910.83,217.42 911.33,217.47 911.83,217.55 912.33,217.44 912.83,217.42 913.33,217.52 913.83,217.59 914.33,217.42 914.83,217.40 915.33,217.54 915.83,217.42 916.33,217.59 916.83,217.58 917.33,217.52 917.83,217.53 918.33,217.47 918.83,217.44 919.33,217.44 919.83,217.43 920.33,217.54 920.83,217.41 921.33,217.51 921.83,217.48 922.33,217.43 922.83,217.41 923.33,217.43 923.83,217.56 924.33,217.50 924.83,217.55 925.33,217.57 925.83,217.53 926.33,217.54 926.83,217.54 927.33,217.48 927.83,217.54 928.33,217.49 928.83,217.44 929.33,217.44 929.83,217.54 930.33,217.50 930.83,217.47 931.33,217.47 931.83,217.51 932.33,217.52 932.83,217.56 933.33,217.46 933.83,217.48 934.33,217.56 934.83,217.55 935.33,217.60 935.83,217.49 936.33,217.47 936.83,217.47 937.33,217.50 937.83,217.41 938.33,217.39 938.83,217.51 939.33,217.27 939.83,217.32 940.33,217.35 940.83,217.21 940.83,219.12 940.33,219.11 939.83,219.05 939.33,219.01 938.83,218.94 938.33,218.94 937.83,218.92 937.33,218.86 936.83,218.82 936.33,218.96 935.83,218.97 935.33,218.86 934.83,218.79 934.33,218.76 933.83,218.89 933.33,218.77 932.83,218.89 932.33,218.93 931.83,218.88 931.33,218.84 930.83,218.88 930.33,218.78 929.83,218.96 929.33,218.88 928.83,218.93 928.33,218.94 927.83,218.82 927.33,218.87 926.83,218.92 926.33,218.94 925.83,218.88 925.33,218.79 924.83,218.85 924.33,218.90 923.83,218.79 923.33,218.97 922.83,218.90 922.33,218.87 921.83,218.84 921.33,218.91 920.83,218.90 920.33,218.99 919.83,218.90 919.33,218.90 918.83,218.86 918.33,218.82 917.83,218.98 917.33,218.85 916.83,218.99 916.33,219.01 915.83,218.80 915.33,218.94 914.83,218.98 914.33,219.01 913.83,218.99 913.33,218.90 912.83,218.83 912.33,219.00 911.83,218.82 911.33,218.95 910.83,218.86 910.33,218.85 909.83,219.02 909.33,218.93 908.83,218.85 908.33,218.98 907.83,218.85 907.33,218.96 906.83,218.84 906.33,218.98 905.83,218.87 905.33,218.93 904.83,218.99 904.33,219.00 903.83,219.04 903.33,218.98 902.83,218.96 902.33,218.98 901.83,218.85 901.33,219.05 900.83,218.98 900.33,219.05 899.83,218.85 899.33,219.02 898.83,219.04 898.33,218.90 897.83,218.95 897.33,219.04 896.83,219.08 896.33,218.92 895.83,218.90 895.33,218.98 894.83,218.97 894.33,219.06 893.83,218.96 893.33,219.11 892.83,219.11 892.33,219.11 891.83,218.96 891.33,219.01 890.83,219.03 890.33,218.91 889.83,219.10 889.33,219.05 888.83,218.94 888.33,219.08 887.83,219.10 887.33,219.06 886.83,219.13 886.33,218.98 885.83,219.00 885.33,218.92 884.83,219.00 884.33,219.01 883.83,218.98 883.33,219.13 882.83,219.00 882.33,218.94 881.83,219.08 881.33,219.14 880.83,219.00 880.33,218.96 879.83,218.99 879.33,218.97 878.83,218.98 878.33,218.99 877.83,219.10 877.33,218.98 876.83,219.12 876.33,219.12 875.83,219.04 875.33,219.01 874.83,219.08 874.33,219.11 873.83,218.99 873.33,219.05 872.83,219.02 872.33,219.17 871.83,219.08 871.33,219.24 870.83,219.11 870.33,219.23 869.83,219.23 869.33,219.03 868.83,219.11 868.33,219.15 867.83,219.24 867.33,219.20 866.83,219.31 866.33,219.10 865.83,219.12 865.33,219.36 864.83,219.26 864.33,219.39 863.83,219.30 863.33,219.17 862.83,219.38 862.33,219.14 861.83,219.31 861.33,219.24 860.83,219.27 860.33,219.31 859.83,219.30 859.33,219.21 858.83,219.46 858.33,219.31 857.83,219.52 857.33,219.43 856.83,219.33 856.33,219.35 855.83,219.36 855.33,219.29 854.83,219.58 854.33,219.50 853.83,219.48 853.33,219.46 852.83,219.42 852.33,219.34 851.83,219.46 851.33,219.42 850.83,219.32 850.33,219.46 849.83,219.35 849.33,219.46 848.83,219.41 848.33,219.41 847.83,219.33 847.33,219.59 846.83,219.60 846.33,219.65 845.83,219.47 845.33,219.67 844.83,219.54 844.33,219.32 843.83,219.33 843.33,219.43 842.83,219.63 842.33,219.39 841.83,219.67 841.33,219.41 840.83,219.63 840.33,219.33 839.83,219.36 839.33,219.55 838.83,219.60 838.33,219.49 837.83,219.39 837.33,219.48 836.83,219.38 836.33,219.48 835.83,219.43 835.33,219.57 834.83,219.36 834.33,219.33 833.83,219.58 833.33,219.53 832.83,219.53 832.33,219.67 831.83,219.60 831.33,219.58 830.83,219.36 830.33,219.41 829.83,219.61 829.33,219.42 828.83,219.39 828.33,219.34 827.83,219.37 827.33,219.70 826.83,219.74 826.33,219.57 825.83,219.68 825.33,219.66 824.83,219.66 824.33,219.57 823.83,219.54 823.33,219.41 822.83,219.39 822.33,219.46 821.83,219.80 821.33,219.63 820.83,219.78 820.33,219.42 819.83,219.70 819.33,219.81 818.83,219.54 818.33,219.50 817.83,219.57 817.33,219.66 816.83,219.76 816.33,219.52 815.83,219.50 815.33,219.78 814.83,219.54 814.33,219.53 813.83,219.55 813.33,219.83 812.83,219.55 812.33,219.59 811.83,219.90 811.33,219.68 810.83,219.64 810.33,219.64 809.83,219.51 809.33,219.64 808.83,219.63 808.33,219.84 807.83,219.65 807.33,219.75 806.83,219.54 806.33,219.48 805.83,219.80 805.33,219.59 804.83,219.59 804.33,219.80 803.83,219.72 803.33,219.81 802.83,219.79 802.33,219.64 801.83,219.84 801.33,219.52 800.83,219.51 800.33,219.81 799.83,219.61 799.33,219.62 798.83,219.85 798.33,219.77 797.83,219.90 797.33,219.54 796.83,219.91 796.33,219.73 795.83,219.93 795.33,219.93 794.83,220.02 794.33,219.91 793.83,220.01 793.33,219.74 792.83,220.08 792.33,219.99 791.83,220.00 791.33,219.84 790.83,220.07 790.33,219.73 789.83,220.00 789.33,219.69 788.83,219.79 788.33,219.94 787.83,219.92 787.33,219.97 786.83,219.92 786.33,219.89 785.83,220.01 785.33,219.85 784.83,219.89 784.33,219.95 783.83,220.04 783.33,219.81 782.83,220.00 782.33,219.97 781.83,219.84 781.33,220.00 780.83,219.97 780.33,220.04 779.83,220.06 779.33,219.89 778.83,219.84 778.33,219.82 777.83,219.87 777.33,219.83 776.83,220.06 776.33,220.06 775.83,219.91 775.33,219.91 774.83,220.02 774.33,219.86 773.83,219.95 773.33,219.86 772.83,219.94 772.33,220.09 771.83,220.17 771.33,220.15 770.83,220.18 770.33,220.06 769.83,220.20 769.33,220.15 768.83,219.97 768.33,220.04 767.83,220.08 767.33,219.97 766.83,220.06 766.33,220.03 765.83,220.10 765.33,220.05 764.83,220.27 764.33,220.07 763.83,220.46 763.33,220.59 762.83,220.68 762.33,220.89 761.83,221.21 761.33,221.01 760.83,220.87 760.33,220.73 759.83,220.98 759.33,220.64 758.83,220.33 758.33,220.20 757.83,220.53 757.33,220.74 756.83,220.81 756.33,221.52 755.83,221.66 755.33,221.94 754.83,221.79 754.33,221.97 753.83,221.77 753.33,221.41 752.83,221.04 752.33,220.83 751.83,220.60 751.33,220.79 750.83,220.89 750.33,220.95 749.83,221.06 749.33,221.17 748.83,221.71 748.33,221.51 747.83,221.99 747.33,222.26 746.83,221.72 746.33,222.00 745.83,221.68 745.33,221.96 744.83,221.60 744.33,221.52 743.83,221.28 743.33,220.99 742.83,221.22 742.33,221.25 741.83,220.89 741.33,220.69 740.83,220.90 740.33,220.45 739.83,220.26 739.33,220.34 738.83,219.94 738.33,219.94 737.83,219.92 737.33,219.96 736.83,220.10 736.33,219.98 735.83,220.32 735.33,220.45 734.83,220.52 734.33,220.75 733.83,220.99 733.33,221.36 732.83,221.66 732.33,222.17 731.83,223.08 731.33,223.00 730.83,222.71 730.33,222.96 729.83,222.11 729.33,221.92 728.83,222.16 728.33,221.39 727.83,221.27 727.33,221.01 726.83,221.38 726.33,221.39 725.83,221.23 725.33,221.22 724.83,221.25 724.33,221.71 723.83,221.96 723.33,222.33 722.83,222.96 722.33,224.85 721.83,225.65 721.33,225.56 720.83,225.58 720.33,226.28 719.83,226.47 719.33,226.69 718.83,228.26 718.33,228.60 717.83,229.16 717.33,229.21 716.83,229.81 716.33,228.11 715.83,225.88 715.33,225.56 714.83,224.64 714.33,224.27 713.83,224.60 713.33,223.51 712.83,223.46 712.33,224.15 711.83,223.37 711.33,223.33 710.83,223.57 710.33,223.40 709.83,223.53 709.33,223.66 708.83,222.88 708.33,222.90 707.83,224.36 707.33,225.03 706.83,227.12 706.33,227.43 705.83,226.80 705.33,225.89 704.83,225.16 704.33,224.19 703.83,224.37 703.33,225.03 702.83,226.03 702.33,227.67 701.83,228.83 701.33,227.56 700.83,228.13 700.33,227.95 699.83,227.69 699.33,227.28 698.83,227.33 698.33,227.06 697.83,226.27 697.33,226.73 696.83,225.81 696.33,225.74 695.83,227.59 695.33,228.81 694.83,230.72 694.33,231.39 693.83,232.18 693.33,231.29 692.83,233.08 692.33,232.63 691.83,232.53 691.33,231.98 690.83,231.99 690.33,231.48 689.83,232.35 689.33,232.85 688.83,231.31 688.33,231.66 687.83,232.15 687.33,230.49 686.83,231.33 686.33,230.75 685.83,231.36 685.33,233.97 684.83,233.19 684.33,232.95 683.83,235.54 683.33,237.98 682.83,239.86 682.33,239.62 681.83,240.16 681.33,239.24 680.83,237.57 680.33,237.67 679.83,235.00 679.33,234.72 678.83,235.79 678.33,237.20 677.83,237.24 677.33,235.71 676.83,233.79 676.33,232.38 675.83,231.54 675.33,231.27 674.83,234.08 674.33,233.24 673.83,234.93 673.33,233.52 672.83,236.16 672.33,235.69 671.83,234.46 671.33,232.27 670.83,227.31 670.33,228.94 669.83,227.90 669.33,229.37 668.83,229.70 668.33,227.40 667.83,225.93 667.33,225.95 666.83,228.44 666.33,228.67 665.83,231.21 665.33,230.29 664.83,232.49 664.33,230.99 663.83,231.64 663.33,233.34 662.83,234.47 662.33,234.46 661.83,238.94 661.33,240.84 660.83,240.69 660.33,242.16 659.83,245.10 659.33,243.42 658.83,245.61 658.33,245.94 657.83,248.14 657.33,245.70 656.83,247.29 656.33,249.91 655.83,250.46 655.33,253.73 654.83,249.85 654.33,245.94 653.83,240.94 653.33,235.55" fill="#118bbe" stroke="#118bbe" stroke-width="0.6" stroke-linejoin="round"/>
<line x1="654.50" y1="260.5" x2="654.50" y2="264.6" stroke="#1a1a1a" stroke-width="0.95"/>
<text x="654.70" y="275.00" text-anchor="middle" textLength="20.55" lengthAdjust="spacingAndGlyphs">0.00</text>
<line x1="698.40" y1="260.5" x2="698.40" y2="264.6" stroke="#1a1a1a" stroke-width="0.95"/>
<text x="698.60" y="275.00" text-anchor="middle" textLength="20.55" lengthAdjust="spacingAndGlyphs">0.05</text>
<line x1="742.30" y1="260.5" x2="742.30" y2="264.6" stroke="#1a1a1a" stroke-width="0.95"/>
<text x="742.50" y="275.00" text-anchor="middle" textLength="20.55" lengthAdjust="spacingAndGlyphs">0.10</text>
<line x1="786.20" y1="260.5" x2="786.20" y2="264.6" stroke="#1a1a1a" stroke-width="0.95"/>
<text x="786.40" y="275.00" text-anchor="middle" textLength="20.55" lengthAdjust="spacingAndGlyphs">0.15</text>
<line x1="830.10" y1="260.5" x2="830.10" y2="264.6" stroke="#1a1a1a" stroke-width="0.95"/>
<text x="830.30" y="275.00" text-anchor="middle" textLength="20.55" lengthAdjust="spacingAndGlyphs">0.20</text>
<line x1="874.00" y1="260.5" x2="874.00" y2="264.6" stroke="#1a1a1a" stroke-width="0.95"/>
<text x="874.20" y="275.00" text-anchor="middle" textLength="20.55" lengthAdjust="spacingAndGlyphs">0.25</text>
<line x1="917.90" y1="260.5" x2="917.90" y2="264.6" stroke="#1a1a1a" stroke-width="0.95"/>
<text x="918.10" y="275.00" text-anchor="middle" textLength="20.55" lengthAdjust="spacingAndGlyphs">0.30</text>
<line x1="636.4" y1="181.20" x2="640.5" y2="181.20" stroke="#1a1a1a" stroke-width="0.95"/>
<text x="632.10" y="185.10" text-anchor="end" textLength="5.87" lengthAdjust="spacingAndGlyphs">1</text>
<line x1="636.4" y1="218.50" x2="640.5" y2="218.50" stroke="#1a1a1a" stroke-width="0.95"/>
<text x="633.30" y="222.40" text-anchor="end" textLength="5.87" lengthAdjust="spacingAndGlyphs">0</text>
<line x1="636.4" y1="256.30" x2="640.5" y2="256.30" stroke="#1a1a1a" stroke-width="0.95"/>
<text x="631.00" y="260.20" text-anchor="end" textLength="14.11" lengthAdjust="spacingAndGlyphs">−1</text>
<text x="611.00" y="220.80" text-anchor="middle" textLength="32.76" lengthAdjust="spacingAndGlyphs" transform="rotate(-90 611.00 220.80)">profile</text>
<text x="797.50" y="289.50" text-anchor="middle" textLength="51.94" lengthAdjust="spacingAndGlyphs">time (sec)</text>
</svg>
<svg width="400" height="235" viewBox="600 325 400 235" style="position:absolute;left:600px;top:325px;will-change:transform" font-family="Liberation Sans, sans-serif" font-size="10.5" fill="#1a1a1a">
<rect x="685.5" y="343.5" width="270" height="81" fill="#fff" stroke="#1a1a1a" stroke-width="0.95"/>
<clipPath id="c3"><rect x="686" y="344" width="269" height="80"/></clipPath>
<g clip-path="url(#c3)" fill="#0433ff" stroke="#0433ff" stroke-width="0.95" stroke-linejoin="round"><polygon points="697.50,371.20 698.24,373.48 700.64,373.48 698.70,374.89 699.44,377.17 697.50,375.76 695.56,377.17 696.30,374.89 694.36,373.48 696.76,373.48"/><polygon points="707.50,376.20 708.24,378.48 710.64,378.48 708.70,379.89 709.44,382.17 707.50,380.76 705.56,382.17 706.30,379.89 704.36,378.48 706.76,378.48"/><polygon points="716.50,368.20 717.24,370.48 719.64,370.48 717.70,371.89 718.44,374.17 716.50,372.76 714.56,374.17 715.30,371.89 713.36,370.48 715.76,370.48"/><polygon points="726.50,354.20 727.24,356.48 729.64,356.48 727.70,357.89 728.44,360.17 726.50,358.76 724.56,360.17 725.30,357.89 723.36,356.48 725.76,356.48"/><polygon points="735.50,344.20 736.24,346.48 738.64,346.48 736.70,347.89 737.44,350.17 735.50,348.76 733.56,350.17 734.30,347.89 732.36,346.48 734.76,346.48"/><polygon points="744.50,345.20 745.24,347.48 747.64,347.48 745.70,348.89 746.44,351.17 744.50,349.76 742.56,351.17 743.30,348.89 741.36,347.48 743.76,347.48"/><polygon points="754.50,351.20 755.24,353.48 757.64,353.48 755.70,354.89 756.44,357.17 754.50,355.76 752.56,357.17 753.30,354.89 751.36,353.48 753.76,353.48"/><polygon points="763.50,363.20 764.24,365.48 766.64,365.48 764.70,366.89 765.44,369.17 763.50,367.76 761.56,369.17 762.30,366.89 760.36,365.48 762.76,365.48"/><polygon points="773.50,359.20 774.24,361.48 776.64,361.48 774.70,362.89 775.44,365.17 773.50,363.76 771.56,365.17 772.30,362.89 770.36,361.48 772.76,361.48"/><polygon points="782.50,369.20 783.24,371.48 785.64,371.48 783.70,372.89 784.44,375.17 782.50,373.76 780.56,375.17 781.30,372.89 779.36,371.48 781.76,371.48"/><polygon points="792.50,373.20 793.24,375.48 795.64,375.48 793.70,376.89 794.44,379.17 792.50,377.76 790.56,379.17 791.30,376.89 789.36,375.48 791.76,375.48"/><polygon points="801.50,379.20 802.24,381.48 804.64,381.48 802.70,382.89 803.44,385.17 801.50,383.76 799.56,385.17 800.30,382.89 798.36,381.48 800.76,381.48"/><polygon points="811.50,380.20 812.24,382.48 814.64,382.48 812.70,383.89 813.44,386.17 811.50,384.76 809.56,386.17 810.30,383.89 808.36,382.48 810.76,382.48"/><polygon points="820.50,379.20 821.24,381.48 823.64,381.48 821.70,382.89 822.44,385.17 820.50,383.76 818.56,385.17 819.30,382.89 817.36,381.48 819.76,381.48"/><polygon points="829.50,368.20 830.24,370.48 832.64,370.48 830.70,371.89 831.44,374.17 829.50,372.76 827.56,374.17 828.30,371.89 826.36,370.48 828.76,370.48"/><polygon points="839.50,392.20 840.24,394.48 842.64,394.48 840.70,395.89 841.44,398.17 839.50,396.76 837.56,398.17 838.30,395.89 836.36,394.48 838.76,394.48"/><polygon points="848.50,377.20 849.24,379.48 851.64,379.48 849.70,380.89 850.44,383.17 848.50,381.76 846.56,383.17 847.30,380.89 845.36,379.48 847.76,379.48"/><polygon points="858.50,383.20 859.24,385.48 861.64,385.48 859.70,386.89 860.44,389.17 858.50,387.76 856.56,389.17 857.30,386.89 855.36,385.48 857.76,385.48"/><polygon points="867.50,392.20 868.24,394.48 870.64,394.48 868.70,395.89 869.44,398.17 867.50,396.76 865.56,398.17 866.30,395.89 864.36,394.48 866.76,394.48"/><polygon points="877.50,376.20 878.24,378.48 880.64,378.48 878.70,379.89 879.44,382.17 877.50,380.76 875.56,382.17 876.30,379.89 874.36,378.48 876.76,378.48"/><polygon points="886.50,383.20 887.24,385.48 889.64,385.48 887.70,386.89 888.44,389.17 886.50,387.76 884.56,389.17 885.30,386.89 883.36,385.48 885.76,385.48"/><polygon points="896.50,402.20 897.24,404.48 899.64,404.48 897.70,405.89 898.44,408.17 896.50,406.76 894.56,408.17 895.30,405.89 893.36,404.48 895.76,404.48"/><polygon points="905.50,383.20 906.24,385.48 908.64,385.48 906.70,386.89 907.44,389.17 905.50,387.76 903.56,389.17 904.30,386.89 902.36,385.48 904.76,385.48"/><polygon points="914.50,407.20 915.24,409.48 917.64,409.48 915.70,410.89 916.44,413.17 914.50,411.76 912.56,413.17 913.30,410.89 911.36,409.48 913.76,409.48"/><polygon points="924.50,405.20 925.24,407.48 927.64,407.48 925.70,408.89 926.44,411.17 924.50,409.76 922.56,411.17 923.30,408.89 921.36,407.48 923.76,407.48"/><polygon points="933.50,418.20 934.24,420.48 936.64,420.48 934.70,421.89 935.44,424.17 933.50,422.76 931.56,424.17 932.30,421.89 930.36,420.48 932.76,420.48"/><polygon points="943.50,413.20 944.24,415.48 946.64,415.48 944.70,416.89 945.44,419.17 943.50,417.76 941.56,419.17 942.30,416.89 940.36,415.48 942.76,415.48"/></g>
<line x1="690.80" y1="424.5" x2="690.80" y2="428.6" stroke="#1a1a1a" stroke-width="0.95"/>
<text x="691.00" y="439.40" text-anchor="middle" textLength="5.87" lengthAdjust="spacingAndGlyphs">0</text>
<line x1="756.24" y1="424.5" x2="756.24" y2="428.6" stroke="#1a1a1a" stroke-width="0.95"/>
<text x="756.44" y="439.40" text-anchor="middle" textLength="5.87" lengthAdjust="spacingAndGlyphs">2</text>
<line x1="821.68" y1="424.5" x2="821.68" y2="428.6" stroke="#1a1a1a" stroke-width="0.95"/>
<text x="821.88" y="439.40" text-anchor="middle" textLength="5.87" lengthAdjust="spacingAndGlyphs">4</text>
<line x1="887.12" y1="424.5" x2="887.12" y2="428.6" stroke="#1a1a1a" stroke-width="0.95"/>
<text x="887.32" y="439.40" text-anchor="middle" textLength="5.87" lengthAdjust="spacingAndGlyphs">6</text>
<line x1="952.56" y1="424.5" x2="952.56" y2="428.6" stroke="#1a1a1a" stroke-width="0.95"/>
<text x="952.76" y="439.40" text-anchor="middle" textLength="5.87" lengthAdjust="spacingAndGlyphs">8</text>
<line x1="681.4" y1="373.30" x2="685.5" y2="373.30" stroke="#1a1a1a" stroke-width="0.95"/>
<text x="678.30" y="377.20" text-anchor="end" textLength="5.87" lengthAdjust="spacingAndGlyphs">0</text>
<line x1="681.4" y1="416.70" x2="685.5" y2="416.70" stroke="#1a1a1a" stroke-width="0.95"/>
<text x="676.00" y="420.60" text-anchor="end" textLength="14.11" lengthAdjust="spacingAndGlyphs">−1</text>
<rect x="685.5" y="441.5" width="270" height="81" fill="#fff" stroke="#1a1a1a" stroke-width="0.95"/>
<clipPath id="c4"><rect x="686" y="442" width="269" height="80"/></clipPath>
<g clip-path="url(#c4)" fill="#0433ff" stroke="#0433ff" stroke-width="0.95" stroke-linejoin="round"><polygon points="697.50,469.20 698.24,471.48 700.64,471.48 698.70,472.89 699.44,475.17 697.50,473.76 695.56,475.17 696.30,472.89 694.36,471.48 696.76,471.48"/><polygon points="708.50,441.20 709.24,443.48 711.64,443.48 709.70,444.89 710.44,447.17 708.50,445.76 706.56,447.17 707.30,444.89 705.36,443.48 707.76,443.48"/><polygon points="719.50,444.20 720.24,446.48 722.64,446.48 720.70,447.89 721.44,450.17 719.50,448.76 717.56,450.17 718.30,447.89 716.36,446.48 718.76,446.48"/><polygon points="729.50,451.20 730.24,453.48 732.64,453.48 730.70,454.89 731.44,457.17 729.50,455.76 727.56,457.17 728.30,454.89 726.36,453.48 728.76,453.48"/><polygon points="740.50,452.20 741.24,454.48 743.64,454.48 741.70,455.89 742.44,458.17 740.50,456.76 738.56,458.17 739.30,455.89 737.36,454.48 739.76,454.48"/><polygon points="751.50,453.20 752.24,455.48 754.64,455.48 752.70,456.89 753.44,459.17 751.50,457.76 749.56,459.17 750.30,456.89 748.36,455.48 750.76,455.48"/><polygon points="761.50,458.20 762.24,460.48 764.64,460.48 762.70,461.89 763.44,464.17 761.50,462.76 759.56,464.17 760.30,461.89 758.36,460.48 760.76,460.48"/><polygon points="772.50,461.20 773.24,463.48 775.64,463.48 773.70,464.89 774.44,467.17 772.50,465.76 770.56,467.17 771.30,464.89 769.36,463.48 771.76,463.48"/><polygon points="783.50,462.20 784.24,464.48 786.64,464.48 784.70,465.89 785.44,468.17 783.50,466.76 781.56,468.17 782.30,465.89 780.36,464.48 782.76,464.48"/><polygon points="793.50,471.20 794.24,473.48 796.64,473.48 794.70,474.89 795.44,477.17 793.50,475.76 791.56,477.17 792.30,474.89 790.36,473.48 792.76,473.48"/><polygon points="804.50,474.20 805.24,476.48 807.64,476.48 805.70,477.89 806.44,480.17 804.50,478.76 802.56,480.17 803.30,477.89 801.36,476.48 803.76,476.48"/><polygon points="815.50,476.20 816.24,478.48 818.64,478.48 816.70,479.89 817.44,482.17 815.50,480.76 813.56,482.17 814.30,479.89 812.36,478.48 814.76,478.48"/><polygon points="825.50,477.20 826.24,479.48 828.64,479.48 826.70,480.89 827.44,483.17 825.50,481.76 823.56,483.17 824.30,480.89 822.36,479.48 824.76,479.48"/><polygon points="836.50,479.20 837.24,481.48 839.64,481.48 837.70,482.89 838.44,485.17 836.50,483.76 834.56,485.17 835.30,482.89 833.36,481.48 835.76,481.48"/><polygon points="847.50,480.20 848.24,482.48 850.64,482.48 848.70,483.89 849.44,486.17 847.50,484.76 845.56,486.17 846.30,483.89 844.36,482.48 846.76,482.48"/><polygon points="857.50,485.20 858.24,487.48 860.64,487.48 858.70,488.89 859.44,491.17 857.50,489.76 855.56,491.17 856.30,488.89 854.36,487.48 856.76,487.48"/><polygon points="868.50,490.20 869.24,492.48 871.64,492.48 869.70,493.89 870.44,496.17 868.50,494.76 866.56,496.17 867.30,493.89 865.36,492.48 867.76,492.48"/><polygon points="879.50,496.20 880.24,498.48 882.64,498.48 880.70,499.89 881.44,502.17 879.50,500.76 877.56,502.17 878.30,499.89 876.36,498.48 878.76,498.48"/><polygon points="889.50,497.20 890.24,499.48 892.64,499.48 890.70,500.89 891.44,503.17 889.50,501.76 887.56,503.17 888.30,500.89 886.36,499.48 888.76,499.48"/><polygon points="900.50,505.20 901.24,507.48 903.64,507.48 901.70,508.89 902.44,511.17 900.50,509.76 898.56,511.17 899.30,508.89 897.36,507.48 899.76,507.48"/><polygon points="911.50,514.20 912.24,516.48 914.64,516.48 912.70,517.89 913.44,520.17 911.50,518.76 909.56,520.17 910.30,517.89 908.36,516.48 910.76,516.48"/><polygon points="921.50,514.20 922.24,516.48 924.64,516.48 922.70,517.89 923.44,520.17 921.50,518.76 919.56,520.17 920.30,517.89 918.36,516.48 920.76,516.48"/><polygon points="932.50,515.20 933.24,517.48 935.64,517.48 933.70,518.89 934.44,521.17 932.50,519.76 930.56,521.17 931.30,518.89 929.36,517.48 931.76,517.48"/><polygon points="943.50,512.20 944.24,514.48 946.64,514.48 944.70,515.89 945.44,518.17 943.50,516.76 941.56,518.17 942.30,515.89 940.36,514.48 942.76,514.48"/></g>
<line x1="690.80" y1="522.5" x2="690.80" y2="526.6" stroke="#1a1a1a" stroke-width="0.95"/>
<text x="691.00" y="537.40" text-anchor="middle" textLength="5.87" lengthAdjust="spacingAndGlyphs">0</text>
<line x1="756.24" y1="522.5" x2="756.24" y2="526.6" stroke="#1a1a1a" stroke-width="0.95"/>
<text x="756.44" y="537.40" text-anchor="middle" textLength="5.87" lengthAdjust="spacingAndGlyphs">2</text>
<line x1="821.68" y1="522.5" x2="821.68" y2="526.6" stroke="#1a1a1a" stroke-width="0.95"/>
<text x="821.88" y="537.40" text-anchor="middle" textLength="5.87" lengthAdjust="spacingAndGlyphs">4</text>
<line x1="887.12" y1="522.5" x2="887.12" y2="526.6" stroke="#1a1a1a" stroke-width="0.95"/>
<text x="887.32" y="537.40" text-anchor="middle" textLength="5.87" lengthAdjust="spacingAndGlyphs">6</text>
<line x1="952.56" y1="522.5" x2="952.56" y2="526.6" stroke="#1a1a1a" stroke-width="0.95"/>
<text x="952.76" y="537.40" text-anchor="middle" textLength="5.87" lengthAdjust="spacingAndGlyphs">8</text>
<line x1="681.4" y1="467.30" x2="685.5" y2="467.30" stroke="#1a1a1a" stroke-width="0.95"/>
<text x="677.10" y="471.20" text-anchor="end" textLength="14.68" lengthAdjust="spacingAndGlyphs">0.0</text>
<line x1="681.4" y1="497.50" x2="685.5" y2="497.50" stroke="#1a1a1a" stroke-width="0.95"/>
<text x="676.10" y="501.40" text-anchor="end" textLength="22.92" lengthAdjust="spacingAndGlyphs">−2.5</text>
<text x="820.00" y="551.50" text-anchor="middle" textLength="51.94" lengthAdjust="spacingAndGlyphs">time (sec)</text>
<text x="653.0" y="384.7" text-anchor="middle" transform="rotate(-90 653.0 384.7)" textLength="71.5" lengthAdjust="spacingAndGlyphs">residuals (<tspan font-style="italic">μ</tspan>s)</text>
<text x="643.2" y="481.9" text-anchor="middle" transform="rotate(-90 643.2 481.9)" textLength="71.5" lengthAdjust="spacingAndGlyphs">residuals (<tspan font-style="italic">μ</tspan>s)</text>
</svg>
</body></html>
